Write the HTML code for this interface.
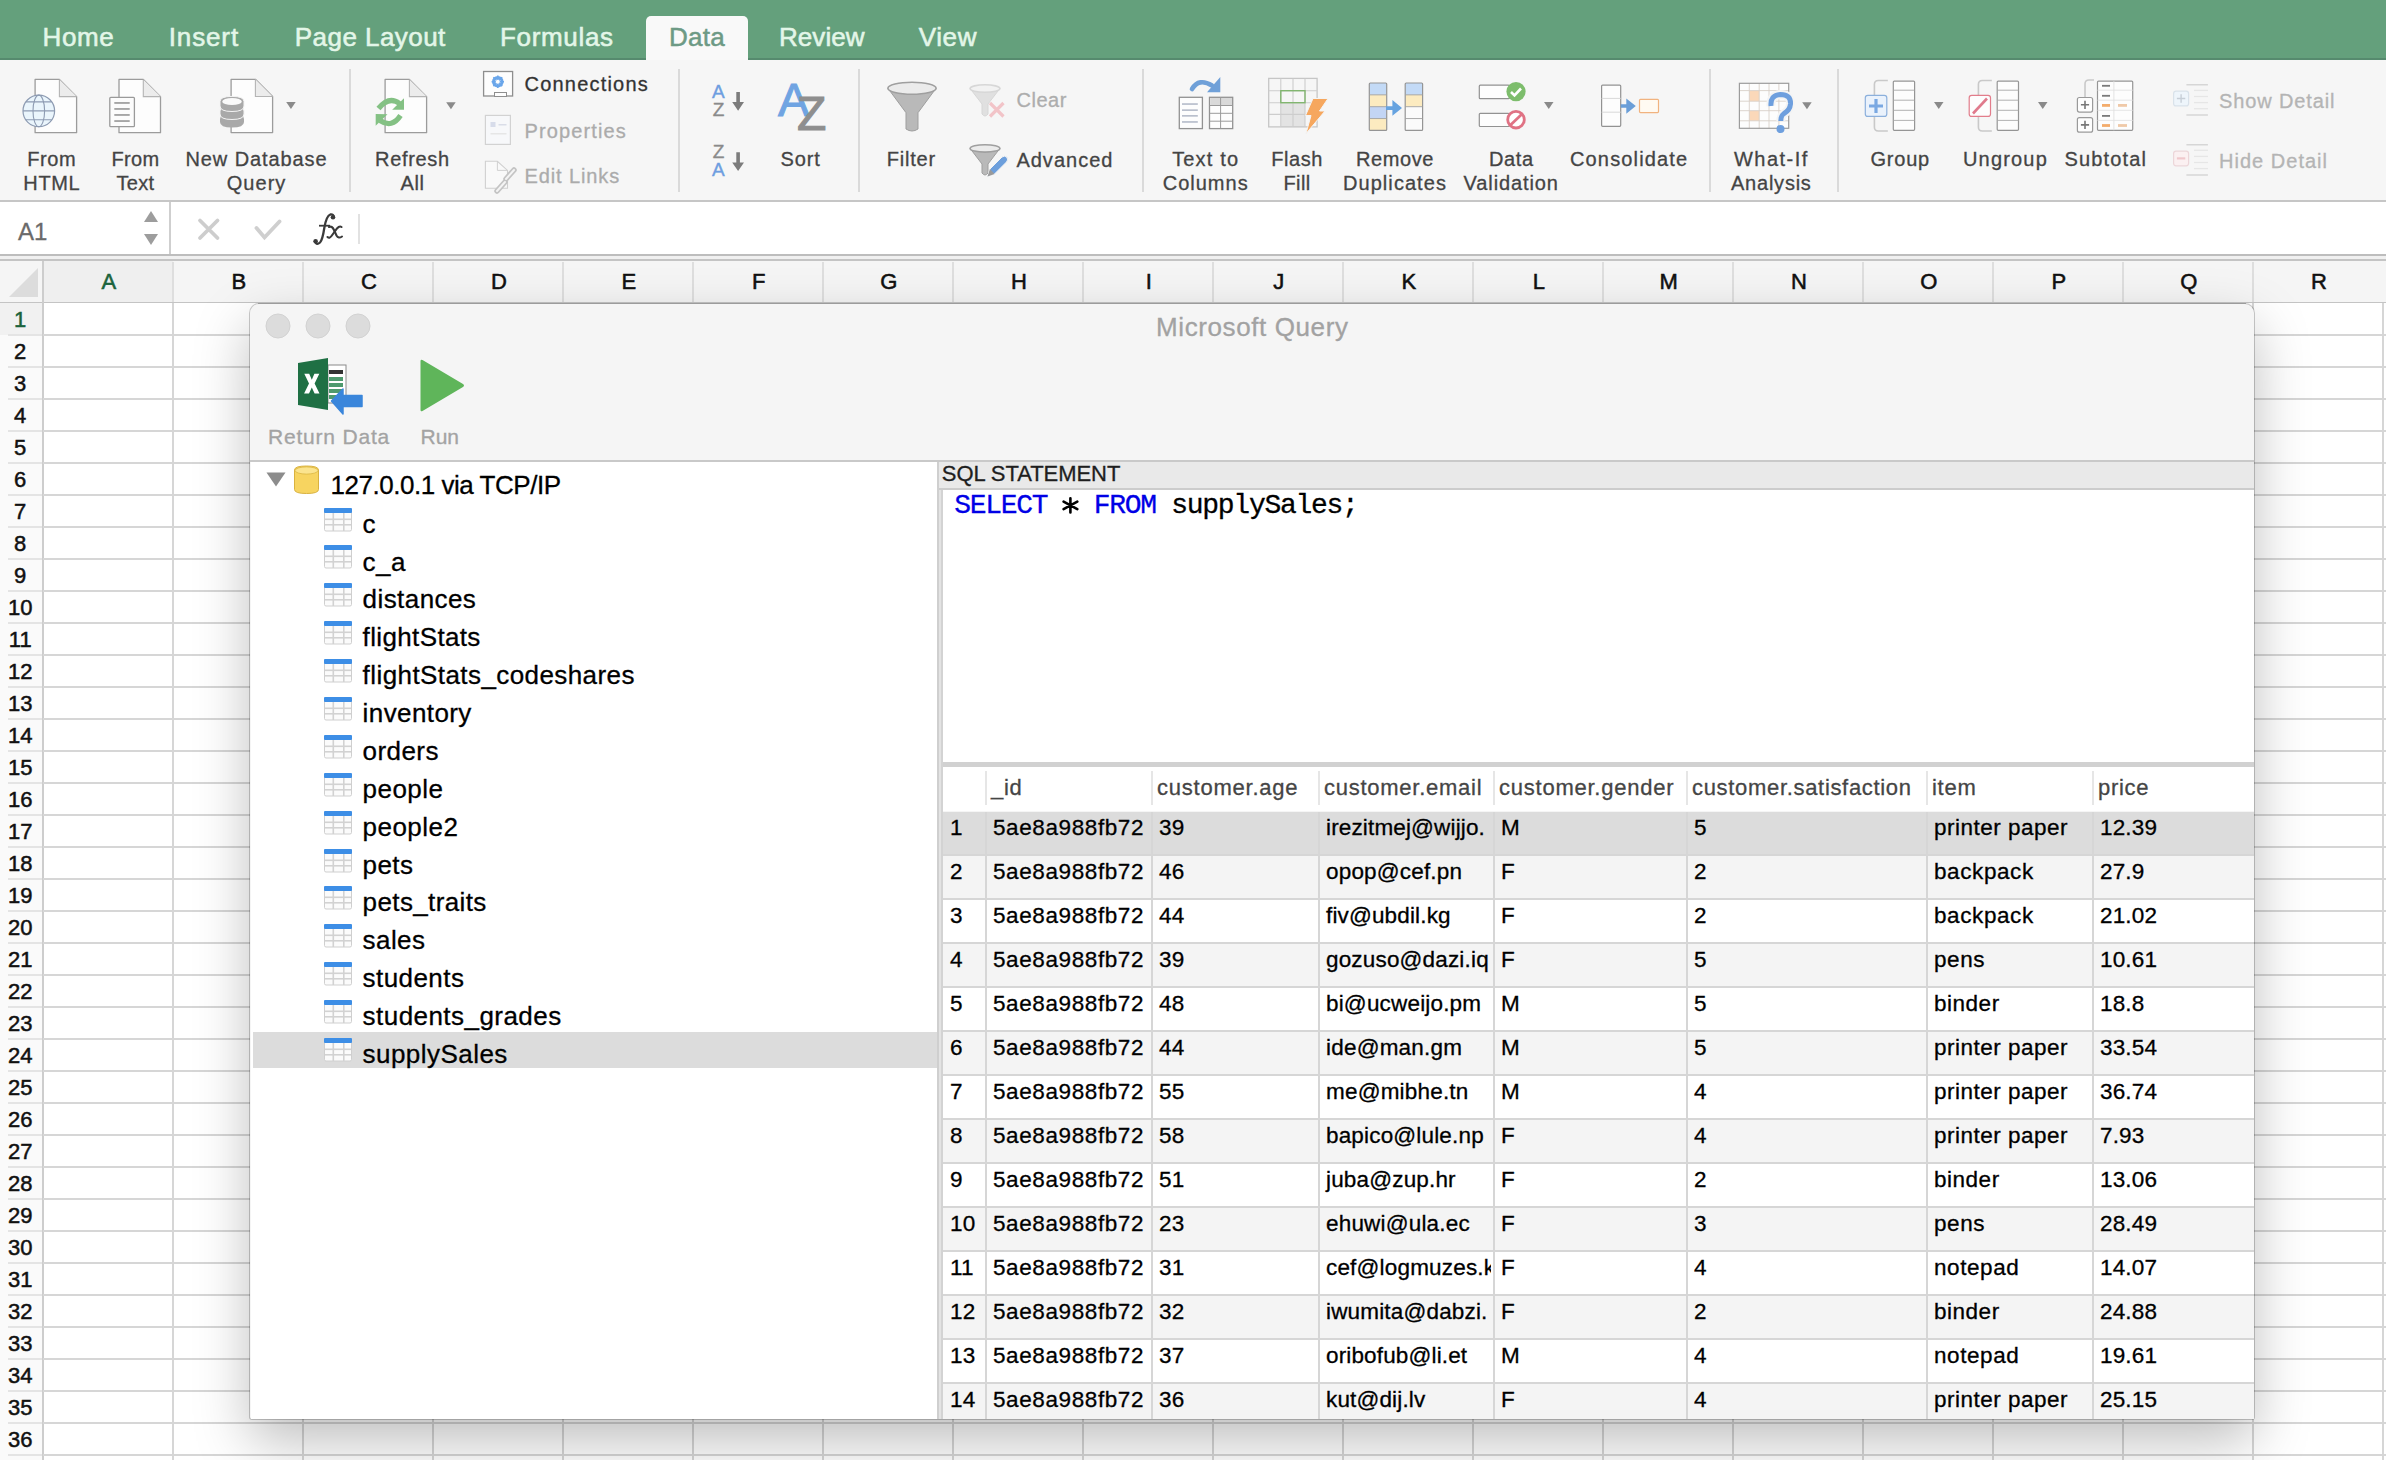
<!DOCTYPE html>
<html><head><meta charset="utf-8"><title>Excel Microsoft Query</title>
<style>
html,body{margin:0;padding:0;}
body{width:2386px;height:1460px;overflow:hidden;position:relative;background:#fff;font-family:"Liberation Sans",sans-serif;}
.t{position:absolute;white-space:pre;-webkit-text-stroke:0.3px currentColor;}
.r{position:absolute;}
.s{position:absolute;overflow:visible;}
</style></head><body>
<div class="r" style="left:0px;top:0px;width:2386px;height:60px;background:#64a07c;"></div>
<div class="r" style="left:0px;top:58px;width:2386px;height:2px;background:#568a6e;"></div>
<div class="r" style="left:646px;top:15.5px;width:102px;height:45.5px;background:#f9f9f9;border-radius:5px 5px 0 0;"></div>
<div class="t" style="left:42.5px;top:24.0px;font-size:26px;line-height:26px;color:#e3f6e8;letter-spacing:0.66px;-webkit-text-stroke:0.55px currentColor;">Home</div>
<div class="t" style="left:168.7px;top:24.0px;font-size:26px;line-height:26px;color:#e3f6e8;letter-spacing:0.88px;-webkit-text-stroke:0.55px currentColor;">Insert</div>
<div class="t" style="left:294.8px;top:24.0px;font-size:26px;line-height:26px;color:#e3f6e8;letter-spacing:0.45px;-webkit-text-stroke:0.55px currentColor;">Page Layout</div>
<div class="t" style="left:500.0px;top:24.0px;font-size:26px;line-height:26px;color:#e3f6e8;letter-spacing:0.67px;-webkit-text-stroke:0.55px currentColor;">Formulas</div>
<div class="t" style="left:778.9px;top:24.0px;font-size:26px;line-height:26px;color:#e3f6e8;letter-spacing:0.09px;-webkit-text-stroke:0.55px currentColor;">Review</div>
<div class="t" style="left:918.8px;top:24.0px;font-size:26px;line-height:26px;color:#e3f6e8;letter-spacing:0.58px;-webkit-text-stroke:0.55px currentColor;">View</div>
<div class="t" style="left:668.9px;top:24.0px;font-size:26px;line-height:26px;color:#6d9a85;letter-spacing:0.27px;-webkit-text-stroke:0.5px currentColor;">Data</div>
<div class="r" style="left:0px;top:60px;width:2386px;height:140px;background:#f6f6f6;"></div>
<div class="r" style="left:0px;top:200px;width:2386px;height:1.5px;background:#c6c6c6;"></div>
<div class="r" style="left:349px;top:69px;width:1.5px;height:123px;background:#dadada;"></div>
<div class="r" style="left:678px;top:69px;width:1.5px;height:123px;background:#dadada;"></div>
<div class="r" style="left:858px;top:69px;width:1.5px;height:123px;background:#dadada;"></div>
<div class="r" style="left:1142px;top:69px;width:1.5px;height:123px;background:#dadada;"></div>
<div class="r" style="left:1709px;top:69px;width:1.5px;height:123px;background:#dadada;"></div>
<div class="r" style="left:1837px;top:69px;width:1.5px;height:123px;background:#dadada;"></div>
<div class="t" style="left:27.3px;top:148.6px;font-size:20px;line-height:20px;color:#444444;letter-spacing:0.58px;">From</div>
<div class="t" style="left:23.3px;top:172.8px;font-size:20px;line-height:20px;color:#444444;letter-spacing:0.64px;">HTML</div>
<div class="t" style="left:111.5px;top:148.6px;font-size:20px;line-height:20px;color:#444444;letter-spacing:0.33px;">From</div>
<div class="t" style="left:116.5px;top:172.8px;font-size:20px;line-height:20px;color:#444444;letter-spacing:0.33px;">Text</div>
<div class="t" style="left:185.5px;top:148.6px;font-size:20px;line-height:20px;color:#444444;letter-spacing:0.90px;">New Database</div>
<div class="t" style="left:226.8px;top:172.8px;font-size:20px;line-height:20px;color:#444444;letter-spacing:1.01px;">Query</div>
<div class="t" style="left:375.1px;top:148.6px;font-size:20px;line-height:20px;color:#444444;letter-spacing:0.67px;">Refresh</div>
<div class="t" style="left:400.5px;top:172.8px;font-size:20px;line-height:20px;color:#444444;letter-spacing:0.59px;">All</div>
<div class="t" style="left:780.5px;top:148.6px;font-size:20px;line-height:20px;color:#444444;letter-spacing:0.90px;">Sort</div>
<div class="t" style="left:886.8px;top:148.6px;font-size:20px;line-height:20px;color:#444444;letter-spacing:0.79px;">Filter</div>
<div class="t" style="left:1172.2px;top:148.6px;font-size:20px;line-height:20px;color:#444444;letter-spacing:1.15px;">Text to</div>
<div class="t" style="left:1162.7px;top:172.8px;font-size:20px;line-height:20px;color:#444444;letter-spacing:1.01px;">Columns</div>
<div class="t" style="left:1271.2px;top:148.6px;font-size:20px;line-height:20px;color:#444444;letter-spacing:0.56px;">Flash</div>
<div class="t" style="left:1283.5px;top:172.8px;font-size:20px;line-height:20px;color:#444444;letter-spacing:0.36px;">Fill</div>
<div class="t" style="left:1356.0px;top:148.6px;font-size:20px;line-height:20px;color:#444444;letter-spacing:0.59px;">Remove</div>
<div class="t" style="left:1343.0px;top:172.8px;font-size:20px;line-height:20px;color:#444444;letter-spacing:1.06px;">Duplicates</div>
<div class="t" style="left:1489.0px;top:148.6px;font-size:20px;line-height:20px;color:#444444;letter-spacing:0.61px;">Data</div>
<div class="t" style="left:1463.6px;top:172.8px;font-size:20px;line-height:20px;color:#444444;letter-spacing:0.89px;">Validation</div>
<div class="t" style="left:1570.0px;top:148.6px;font-size:20px;line-height:20px;color:#444444;letter-spacing:1.15px;">Consolidate</div>
<div class="t" style="left:1734.0px;top:148.6px;font-size:20px;line-height:20px;color:#444444;letter-spacing:1.46px;">What-If</div>
<div class="t" style="left:1731.0px;top:172.8px;font-size:20px;line-height:20px;color:#444444;letter-spacing:0.77px;">Analysis</div>
<div class="t" style="left:1870.5px;top:148.6px;font-size:20px;line-height:20px;color:#444444;letter-spacing:0.78px;">Group</div>
<div class="t" style="left:1963.0px;top:148.6px;font-size:20px;line-height:20px;color:#444444;letter-spacing:1.18px;">Ungroup</div>
<div class="t" style="left:2064.6px;top:148.6px;font-size:20px;line-height:20px;color:#444444;letter-spacing:1.13px;">Subtotal</div>
<div class="t" style="left:524.5px;top:74.4px;font-size:20px;line-height:20px;color:#333;letter-spacing:1.21px;">Connections</div>
<div class="t" style="left:524.5px;top:120.8px;font-size:20px;line-height:20px;color:#ababab;letter-spacing:1.13px;">Properties</div>
<div class="t" style="left:524.5px;top:166.1px;font-size:20px;line-height:20px;color:#ababab;letter-spacing:0.88px;">Edit Links</div>
<div class="t" style="left:1016.4px;top:90.4px;font-size:20px;line-height:20px;color:#adadad;letter-spacing:0.56px;">Clear</div>
<div class="t" style="left:1016.4px;top:150.4px;font-size:20px;line-height:20px;color:#444444;letter-spacing:1.01px;">Advanced</div>
<div class="t" style="left:2219.0px;top:90.5px;font-size:20px;line-height:20px;color:#b4b4b4;letter-spacing:0.88px;">Show Detail</div>
<div class="t" style="left:2219.0px;top:150.9px;font-size:20px;line-height:20px;color:#b4b4b4;letter-spacing:1.02px;">Hide Detail</div>
<div class="r" style="left:0px;top:201.5px;width:2386px;height:52.5px;background:#ffffff;"></div>
<div class="r" style="left:169px;top:201.5px;width:1.5px;height:52.5px;background:#cfcfcf;"></div>
<div class="r" style="left:0px;top:254px;width:2386px;height:1.5px;background:#bdbdbd;"></div>
<div class="r" style="left:0px;top:255.5px;width:2386px;height:3.5px;background:#f0f0f0;"></div>
<div class="r" style="left:0px;top:259px;width:2386px;height:1.5px;background:#c4c4c4;"></div>
<div class="t" style="left:18.0px;top:219.7px;font-size:24px;line-height:24px;color:#6a6a6a;letter-spacing:0.07px;">A1</div>
<svg class="s" style="left:144px;top:211px;" width="14" height="11" viewBox="0 0 14 11"><path d="M7 0 L14 11 L0 11 Z" fill="#9d9d9d"/></svg>
<svg class="s" style="left:144px;top:234px;" width="14" height="11" viewBox="0 0 14 11"><path d="M0 0 L14 0 L7 11 Z" fill="#9d9d9d"/></svg>
<svg class="s" style="left:190px;top:205px;" width="170" height="45" viewBox="0 0 170 45"><path d="M10 15.5 L27.5 33 M27.5 15.5 L10 33" stroke="#cdcdcd" stroke-width="3.8" stroke-linecap="round"/><path d="M66.5 23 L74.5 32.5 L89.5 16.5" stroke="#cfcfcf" stroke-width="3.8" fill="none" stroke-linecap="round"/><path d="M125 36.5 Q126.5 40.5 130 37.5 Q132.5 35 134.3 23 Q136.3 11 140.3 9.5 Q143.8 9 143.6 12" stroke="#3a3a3a" stroke-width="2.3" fill="none" stroke-linecap="round"/><circle cx="125.6" cy="36.2" r="2.3" fill="#3a3a3a"/><circle cx="143" cy="12.2" r="2.3" fill="#3a3a3a"/><path d="M129 20.7 L140 20.7" stroke="#3a3a3a" stroke-width="1.8"/><path d="M139 22 Q142 20.5 144 25 L146.5 30.5 Q148.5 34 152 31.5" stroke="#3a3a3a" stroke-width="2.1" fill="none" stroke-linecap="round"/><path d="M151.5 22 Q149.5 20.5 147 23.5 L141.5 31 Q139.5 33.8 137.5 32" stroke="#3a3a3a" stroke-width="2.1" fill="none" stroke-linecap="round"/></svg>
<div class="r" style="left:358px;top:214px;width:1.5px;height:30px;background:#e2e2e2;"></div>
<div class="r" style="left:0px;top:260.5px;width:2386px;height:41px;background:#f5f5f5;"></div>
<div class="r" style="left:43px;top:260.5px;width:130px;height:41px;background:#efefef;"></div>
<div class="r" style="left:0px;top:301.5px;width:2386px;height:1.5px;background:#c4c4c4;"></div>
<svg class="s" style="left:9px;top:268px;" width="29" height="29" viewBox="0 0 29 29"><path d="M29 0 L29 29 L0 29 Z" fill="#dcdcdc"/></svg>
<div class="r" style="left:42.2px;top:260.5px;width:1.5px;height:1200px;background:#cdcdcd;"></div>
<div class="t" style="left:101.5px;top:271.1px;font-size:22px;line-height:22px;color:#1b633c;-webkit-text-stroke:0.55px currentColor;">A</div>
<div class="r" style="left:172.3px;top:262px;width:1.5px;height:40px;background:#dedede;"></div>
<div class="t" style="left:231.5px;top:271.1px;font-size:22px;line-height:22px;color:#111;-webkit-text-stroke:0.55px currentColor;">B</div>
<div class="r" style="left:302.3px;top:262px;width:1.5px;height:40px;background:#dedede;"></div>
<div class="t" style="left:360.9px;top:271.1px;font-size:22px;line-height:22px;color:#111;-webkit-text-stroke:0.55px currentColor;">C</div>
<div class="r" style="left:432.3px;top:262px;width:1.5px;height:40px;background:#dedede;"></div>
<div class="t" style="left:490.9px;top:271.1px;font-size:22px;line-height:22px;color:#111;-webkit-text-stroke:0.55px currentColor;">D</div>
<div class="r" style="left:562.3px;top:262px;width:1.5px;height:40px;background:#dedede;"></div>
<div class="t" style="left:621.5px;top:271.1px;font-size:22px;line-height:22px;color:#111;-webkit-text-stroke:0.55px currentColor;">E</div>
<div class="r" style="left:692.3px;top:262px;width:1.5px;height:40px;background:#dedede;"></div>
<div class="t" style="left:752.1px;top:271.1px;font-size:22px;line-height:22px;color:#111;-webkit-text-stroke:0.55px currentColor;">F</div>
<div class="r" style="left:822.3px;top:262px;width:1.5px;height:40px;background:#dedede;"></div>
<div class="t" style="left:880.2px;top:271.1px;font-size:22px;line-height:22px;color:#111;-webkit-text-stroke:0.55px currentColor;">G</div>
<div class="r" style="left:952.3px;top:262px;width:1.5px;height:40px;background:#dedede;"></div>
<div class="t" style="left:1010.9px;top:271.1px;font-size:22px;line-height:22px;color:#111;-webkit-text-stroke:0.55px currentColor;">H</div>
<div class="r" style="left:1082.3px;top:262px;width:1.5px;height:40px;background:#dedede;"></div>
<div class="t" style="left:1145.7px;top:271.1px;font-size:22px;line-height:22px;color:#111;-webkit-text-stroke:0.55px currentColor;">I</div>
<div class="r" style="left:1212.3px;top:262px;width:1.5px;height:40px;background:#dedede;"></div>
<div class="t" style="left:1273.3px;top:271.1px;font-size:22px;line-height:22px;color:#111;-webkit-text-stroke:0.55px currentColor;">J</div>
<div class="r" style="left:1342.3px;top:262px;width:1.5px;height:40px;background:#dedede;"></div>
<div class="t" style="left:1401.5px;top:271.1px;font-size:22px;line-height:22px;color:#111;-webkit-text-stroke:0.55px currentColor;">K</div>
<div class="r" style="left:1472.3px;top:262px;width:1.5px;height:40px;background:#dedede;"></div>
<div class="t" style="left:1532.7px;top:271.1px;font-size:22px;line-height:22px;color:#111;-webkit-text-stroke:0.55px currentColor;">L</div>
<div class="r" style="left:1602.3px;top:262px;width:1.5px;height:40px;background:#dedede;"></div>
<div class="t" style="left:1659.6px;top:271.1px;font-size:22px;line-height:22px;color:#111;-webkit-text-stroke:0.55px currentColor;">M</div>
<div class="r" style="left:1732.3px;top:262px;width:1.5px;height:40px;background:#dedede;"></div>
<div class="t" style="left:1790.9px;top:271.1px;font-size:22px;line-height:22px;color:#111;-webkit-text-stroke:0.55px currentColor;">N</div>
<div class="r" style="left:1862.3px;top:262px;width:1.5px;height:40px;background:#dedede;"></div>
<div class="t" style="left:1920.2px;top:271.1px;font-size:22px;line-height:22px;color:#111;-webkit-text-stroke:0.55px currentColor;">O</div>
<div class="r" style="left:1992.3px;top:262px;width:1.5px;height:40px;background:#dedede;"></div>
<div class="t" style="left:2051.5px;top:271.1px;font-size:22px;line-height:22px;color:#111;-webkit-text-stroke:0.55px currentColor;">P</div>
<div class="r" style="left:2122.3px;top:262px;width:1.5px;height:40px;background:#dedede;"></div>
<div class="t" style="left:2180.2px;top:271.1px;font-size:22px;line-height:22px;color:#111;-webkit-text-stroke:0.55px currentColor;">Q</div>
<div class="r" style="left:2252.3px;top:262px;width:1.5px;height:40px;background:#dedede;"></div>
<div class="t" style="left:2310.9px;top:271.1px;font-size:22px;line-height:22px;color:#111;-webkit-text-stroke:0.55px currentColor;">R</div>
<div class="r" style="left:43.7px;top:303px;width:2343px;height:1160px;background:#ffffff;"></div>
<div class="r" style="left:0px;top:303px;width:42.2px;height:1160px;background:#fafafa;"></div>
<div class="r" style="left:0px;top:303px;width:42.2px;height:32px;background:#f1f1f1;"></div>
<div class="r" style="left:43px;top:334px;width:2343px;height:1.5px;background:#d6d6d6;"></div>
<div class="r" style="left:8px;top:334px;width:34px;height:1.5px;background:#e4e4e4;"></div>
<div class="r" style="left:43px;top:366px;width:2343px;height:1.5px;background:#d6d6d6;"></div>
<div class="r" style="left:8px;top:366px;width:34px;height:1.5px;background:#e4e4e4;"></div>
<div class="r" style="left:43px;top:398px;width:2343px;height:1.5px;background:#d6d6d6;"></div>
<div class="r" style="left:8px;top:398px;width:34px;height:1.5px;background:#e4e4e4;"></div>
<div class="r" style="left:43px;top:430px;width:2343px;height:1.5px;background:#d6d6d6;"></div>
<div class="r" style="left:8px;top:430px;width:34px;height:1.5px;background:#e4e4e4;"></div>
<div class="r" style="left:43px;top:462px;width:2343px;height:1.5px;background:#d6d6d6;"></div>
<div class="r" style="left:8px;top:462px;width:34px;height:1.5px;background:#e4e4e4;"></div>
<div class="r" style="left:43px;top:494px;width:2343px;height:1.5px;background:#d6d6d6;"></div>
<div class="r" style="left:8px;top:494px;width:34px;height:1.5px;background:#e4e4e4;"></div>
<div class="r" style="left:43px;top:526px;width:2343px;height:1.5px;background:#d6d6d6;"></div>
<div class="r" style="left:8px;top:526px;width:34px;height:1.5px;background:#e4e4e4;"></div>
<div class="r" style="left:43px;top:558px;width:2343px;height:1.5px;background:#d6d6d6;"></div>
<div class="r" style="left:8px;top:558px;width:34px;height:1.5px;background:#e4e4e4;"></div>
<div class="r" style="left:43px;top:590px;width:2343px;height:1.5px;background:#d6d6d6;"></div>
<div class="r" style="left:8px;top:590px;width:34px;height:1.5px;background:#e4e4e4;"></div>
<div class="r" style="left:43px;top:622px;width:2343px;height:1.5px;background:#d6d6d6;"></div>
<div class="r" style="left:8px;top:622px;width:34px;height:1.5px;background:#e4e4e4;"></div>
<div class="r" style="left:43px;top:654px;width:2343px;height:1.5px;background:#d6d6d6;"></div>
<div class="r" style="left:8px;top:654px;width:34px;height:1.5px;background:#e4e4e4;"></div>
<div class="r" style="left:43px;top:686px;width:2343px;height:1.5px;background:#d6d6d6;"></div>
<div class="r" style="left:8px;top:686px;width:34px;height:1.5px;background:#e4e4e4;"></div>
<div class="r" style="left:43px;top:718px;width:2343px;height:1.5px;background:#d6d6d6;"></div>
<div class="r" style="left:8px;top:718px;width:34px;height:1.5px;background:#e4e4e4;"></div>
<div class="r" style="left:43px;top:750px;width:2343px;height:1.5px;background:#d6d6d6;"></div>
<div class="r" style="left:8px;top:750px;width:34px;height:1.5px;background:#e4e4e4;"></div>
<div class="r" style="left:43px;top:782px;width:2343px;height:1.5px;background:#d6d6d6;"></div>
<div class="r" style="left:8px;top:782px;width:34px;height:1.5px;background:#e4e4e4;"></div>
<div class="r" style="left:43px;top:814px;width:2343px;height:1.5px;background:#d6d6d6;"></div>
<div class="r" style="left:8px;top:814px;width:34px;height:1.5px;background:#e4e4e4;"></div>
<div class="r" style="left:43px;top:846px;width:2343px;height:1.5px;background:#d6d6d6;"></div>
<div class="r" style="left:8px;top:846px;width:34px;height:1.5px;background:#e4e4e4;"></div>
<div class="r" style="left:43px;top:878px;width:2343px;height:1.5px;background:#d6d6d6;"></div>
<div class="r" style="left:8px;top:878px;width:34px;height:1.5px;background:#e4e4e4;"></div>
<div class="r" style="left:43px;top:910px;width:2343px;height:1.5px;background:#d6d6d6;"></div>
<div class="r" style="left:8px;top:910px;width:34px;height:1.5px;background:#e4e4e4;"></div>
<div class="r" style="left:43px;top:942px;width:2343px;height:1.5px;background:#d6d6d6;"></div>
<div class="r" style="left:8px;top:942px;width:34px;height:1.5px;background:#e4e4e4;"></div>
<div class="r" style="left:43px;top:974px;width:2343px;height:1.5px;background:#d6d6d6;"></div>
<div class="r" style="left:8px;top:974px;width:34px;height:1.5px;background:#e4e4e4;"></div>
<div class="r" style="left:43px;top:1006px;width:2343px;height:1.5px;background:#d6d6d6;"></div>
<div class="r" style="left:8px;top:1006px;width:34px;height:1.5px;background:#e4e4e4;"></div>
<div class="r" style="left:43px;top:1038px;width:2343px;height:1.5px;background:#d6d6d6;"></div>
<div class="r" style="left:8px;top:1038px;width:34px;height:1.5px;background:#e4e4e4;"></div>
<div class="r" style="left:43px;top:1070px;width:2343px;height:1.5px;background:#d6d6d6;"></div>
<div class="r" style="left:8px;top:1070px;width:34px;height:1.5px;background:#e4e4e4;"></div>
<div class="r" style="left:43px;top:1102px;width:2343px;height:1.5px;background:#d6d6d6;"></div>
<div class="r" style="left:8px;top:1102px;width:34px;height:1.5px;background:#e4e4e4;"></div>
<div class="r" style="left:43px;top:1134px;width:2343px;height:1.5px;background:#d6d6d6;"></div>
<div class="r" style="left:8px;top:1134px;width:34px;height:1.5px;background:#e4e4e4;"></div>
<div class="r" style="left:43px;top:1166px;width:2343px;height:1.5px;background:#d6d6d6;"></div>
<div class="r" style="left:8px;top:1166px;width:34px;height:1.5px;background:#e4e4e4;"></div>
<div class="r" style="left:43px;top:1198px;width:2343px;height:1.5px;background:#d6d6d6;"></div>
<div class="r" style="left:8px;top:1198px;width:34px;height:1.5px;background:#e4e4e4;"></div>
<div class="r" style="left:43px;top:1230px;width:2343px;height:1.5px;background:#d6d6d6;"></div>
<div class="r" style="left:8px;top:1230px;width:34px;height:1.5px;background:#e4e4e4;"></div>
<div class="r" style="left:43px;top:1262px;width:2343px;height:1.5px;background:#d6d6d6;"></div>
<div class="r" style="left:8px;top:1262px;width:34px;height:1.5px;background:#e4e4e4;"></div>
<div class="r" style="left:43px;top:1294px;width:2343px;height:1.5px;background:#d6d6d6;"></div>
<div class="r" style="left:8px;top:1294px;width:34px;height:1.5px;background:#e4e4e4;"></div>
<div class="r" style="left:43px;top:1326px;width:2343px;height:1.5px;background:#d6d6d6;"></div>
<div class="r" style="left:8px;top:1326px;width:34px;height:1.5px;background:#e4e4e4;"></div>
<div class="r" style="left:43px;top:1358px;width:2343px;height:1.5px;background:#d6d6d6;"></div>
<div class="r" style="left:8px;top:1358px;width:34px;height:1.5px;background:#e4e4e4;"></div>
<div class="r" style="left:43px;top:1390px;width:2343px;height:1.5px;background:#d6d6d6;"></div>
<div class="r" style="left:8px;top:1390px;width:34px;height:1.5px;background:#e4e4e4;"></div>
<div class="r" style="left:43px;top:1422px;width:2343px;height:1.5px;background:#d6d6d6;"></div>
<div class="r" style="left:8px;top:1422px;width:34px;height:1.5px;background:#e4e4e4;"></div>
<div class="r" style="left:43px;top:1454px;width:2343px;height:1.5px;background:#d6d6d6;"></div>
<div class="r" style="left:8px;top:1454px;width:34px;height:1.5px;background:#e4e4e4;"></div>
<div class="r" style="left:43px;top:1486px;width:2343px;height:1.5px;background:#d6d6d6;"></div>
<div class="r" style="left:8px;top:1486px;width:34px;height:1.5px;background:#e4e4e4;"></div>
<div class="r" style="left:172.3px;top:303px;width:1.5px;height:1160px;background:#d6d6d6;"></div>
<div class="r" style="left:302.3px;top:303px;width:1.5px;height:1160px;background:#d6d6d6;"></div>
<div class="r" style="left:432.3px;top:303px;width:1.5px;height:1160px;background:#d6d6d6;"></div>
<div class="r" style="left:562.3px;top:303px;width:1.5px;height:1160px;background:#d6d6d6;"></div>
<div class="r" style="left:692.3px;top:303px;width:1.5px;height:1160px;background:#d6d6d6;"></div>
<div class="r" style="left:822.3px;top:303px;width:1.5px;height:1160px;background:#d6d6d6;"></div>
<div class="r" style="left:952.3px;top:303px;width:1.5px;height:1160px;background:#d6d6d6;"></div>
<div class="r" style="left:1082.3px;top:303px;width:1.5px;height:1160px;background:#d6d6d6;"></div>
<div class="r" style="left:1212.3px;top:303px;width:1.5px;height:1160px;background:#d6d6d6;"></div>
<div class="r" style="left:1342.3px;top:303px;width:1.5px;height:1160px;background:#d6d6d6;"></div>
<div class="r" style="left:1472.3px;top:303px;width:1.5px;height:1160px;background:#d6d6d6;"></div>
<div class="r" style="left:1602.3px;top:303px;width:1.5px;height:1160px;background:#d6d6d6;"></div>
<div class="r" style="left:1732.3px;top:303px;width:1.5px;height:1160px;background:#d6d6d6;"></div>
<div class="r" style="left:1862.3px;top:303px;width:1.5px;height:1160px;background:#d6d6d6;"></div>
<div class="r" style="left:1992.3px;top:303px;width:1.5px;height:1160px;background:#d6d6d6;"></div>
<div class="r" style="left:2122.3px;top:303px;width:1.5px;height:1160px;background:#d6d6d6;"></div>
<div class="r" style="left:2252.3px;top:303px;width:1.5px;height:1160px;background:#d6d6d6;"></div>
<div class="r" style="left:2382.3px;top:303px;width:1.5px;height:1160px;background:#d6d6d6;"></div>
<div class="t" style="left:14.1px;top:309.4px;font-size:22px;line-height:22px;color:#1b633c;-webkit-text-stroke:0.5px currentColor;">1</div>
<div class="t" style="left:14.1px;top:341.4px;font-size:22px;line-height:22px;color:#111;-webkit-text-stroke:0.5px currentColor;">2</div>
<div class="t" style="left:14.1px;top:373.4px;font-size:22px;line-height:22px;color:#111;-webkit-text-stroke:0.5px currentColor;">3</div>
<div class="t" style="left:14.1px;top:405.4px;font-size:22px;line-height:22px;color:#111;-webkit-text-stroke:0.5px currentColor;">4</div>
<div class="t" style="left:14.1px;top:437.4px;font-size:22px;line-height:22px;color:#111;-webkit-text-stroke:0.5px currentColor;">5</div>
<div class="t" style="left:14.1px;top:469.4px;font-size:22px;line-height:22px;color:#111;-webkit-text-stroke:0.5px currentColor;">6</div>
<div class="t" style="left:14.1px;top:501.4px;font-size:22px;line-height:22px;color:#111;-webkit-text-stroke:0.5px currentColor;">7</div>
<div class="t" style="left:14.1px;top:533.4px;font-size:22px;line-height:22px;color:#111;-webkit-text-stroke:0.5px currentColor;">8</div>
<div class="t" style="left:14.1px;top:565.4px;font-size:22px;line-height:22px;color:#111;-webkit-text-stroke:0.5px currentColor;">9</div>
<div class="t" style="left:8.0px;top:597.4px;font-size:22px;line-height:22px;color:#111;-webkit-text-stroke:0.5px currentColor;">10</div>
<div class="t" style="left:8.8px;top:629.4px;font-size:22px;line-height:22px;color:#111;-webkit-text-stroke:0.5px currentColor;">11</div>
<div class="t" style="left:8.0px;top:661.4px;font-size:22px;line-height:22px;color:#111;-webkit-text-stroke:0.5px currentColor;">12</div>
<div class="t" style="left:8.0px;top:693.4px;font-size:22px;line-height:22px;color:#111;-webkit-text-stroke:0.5px currentColor;">13</div>
<div class="t" style="left:8.0px;top:725.4px;font-size:22px;line-height:22px;color:#111;-webkit-text-stroke:0.5px currentColor;">14</div>
<div class="t" style="left:8.0px;top:757.4px;font-size:22px;line-height:22px;color:#111;-webkit-text-stroke:0.5px currentColor;">15</div>
<div class="t" style="left:8.0px;top:789.4px;font-size:22px;line-height:22px;color:#111;-webkit-text-stroke:0.5px currentColor;">16</div>
<div class="t" style="left:8.0px;top:821.4px;font-size:22px;line-height:22px;color:#111;-webkit-text-stroke:0.5px currentColor;">17</div>
<div class="t" style="left:8.0px;top:853.4px;font-size:22px;line-height:22px;color:#111;-webkit-text-stroke:0.5px currentColor;">18</div>
<div class="t" style="left:8.0px;top:885.4px;font-size:22px;line-height:22px;color:#111;-webkit-text-stroke:0.5px currentColor;">19</div>
<div class="t" style="left:8.0px;top:917.4px;font-size:22px;line-height:22px;color:#111;-webkit-text-stroke:0.5px currentColor;">20</div>
<div class="t" style="left:8.0px;top:949.4px;font-size:22px;line-height:22px;color:#111;-webkit-text-stroke:0.5px currentColor;">21</div>
<div class="t" style="left:8.0px;top:981.4px;font-size:22px;line-height:22px;color:#111;-webkit-text-stroke:0.5px currentColor;">22</div>
<div class="t" style="left:8.0px;top:1013.4px;font-size:22px;line-height:22px;color:#111;-webkit-text-stroke:0.5px currentColor;">23</div>
<div class="t" style="left:8.0px;top:1045.4px;font-size:22px;line-height:22px;color:#111;-webkit-text-stroke:0.5px currentColor;">24</div>
<div class="t" style="left:8.0px;top:1077.4px;font-size:22px;line-height:22px;color:#111;-webkit-text-stroke:0.5px currentColor;">25</div>
<div class="t" style="left:8.0px;top:1109.4px;font-size:22px;line-height:22px;color:#111;-webkit-text-stroke:0.5px currentColor;">26</div>
<div class="t" style="left:8.0px;top:1141.4px;font-size:22px;line-height:22px;color:#111;-webkit-text-stroke:0.5px currentColor;">27</div>
<div class="t" style="left:8.0px;top:1173.4px;font-size:22px;line-height:22px;color:#111;-webkit-text-stroke:0.5px currentColor;">28</div>
<div class="t" style="left:8.0px;top:1205.4px;font-size:22px;line-height:22px;color:#111;-webkit-text-stroke:0.5px currentColor;">29</div>
<div class="t" style="left:8.0px;top:1237.4px;font-size:22px;line-height:22px;color:#111;-webkit-text-stroke:0.5px currentColor;">30</div>
<div class="t" style="left:8.0px;top:1269.4px;font-size:22px;line-height:22px;color:#111;-webkit-text-stroke:0.5px currentColor;">31</div>
<div class="t" style="left:8.0px;top:1301.4px;font-size:22px;line-height:22px;color:#111;-webkit-text-stroke:0.5px currentColor;">32</div>
<div class="t" style="left:8.0px;top:1333.4px;font-size:22px;line-height:22px;color:#111;-webkit-text-stroke:0.5px currentColor;">33</div>
<div class="t" style="left:8.0px;top:1365.4px;font-size:22px;line-height:22px;color:#111;-webkit-text-stroke:0.5px currentColor;">34</div>
<div class="t" style="left:8.0px;top:1397.4px;font-size:22px;line-height:22px;color:#111;-webkit-text-stroke:0.5px currentColor;">35</div>
<div class="t" style="left:8.0px;top:1429.4px;font-size:22px;line-height:22px;color:#111;-webkit-text-stroke:0.5px currentColor;">36</div>
<div class="r" style="left:249.5px;top:304px;width:2004.0px;height:1114.5px;background:#f5f5f5;border-radius:9px 9px 2px 2px;box-shadow:0 22px 55px rgba(0,0,0,0.26),0 0 0 1px rgba(0,0,0,0.2);"></div>
<div class="r" style="left:258px;top:302.5px;width:1988px;height:1.5px;background:#9c9c9c;"></div>
<svg class="s" style="left:265px;top:313px;" width="26" height="26" viewBox="0 0 26 26"><circle cx="13" cy="13" r="12" fill="#dcdcdc" stroke="#d2d2d2" stroke-width="1"/></svg>
<svg class="s" style="left:305px;top:313px;" width="26" height="26" viewBox="0 0 26 26"><circle cx="13" cy="13" r="12" fill="#dcdcdc" stroke="#d2d2d2" stroke-width="1"/></svg>
<svg class="s" style="left:345px;top:313px;" width="26" height="26" viewBox="0 0 26 26"><circle cx="13" cy="13" r="12" fill="#dcdcdc" stroke="#d2d2d2" stroke-width="1"/></svg>
<div class="t" style="left:1156.0px;top:313.8px;font-size:26px;line-height:26px;color:#a2a2a2;letter-spacing:0.60px;">Microsoft Query</div>
<svg class="s" style="left:298px;top:358px;" width="66" height="58" viewBox="0 0 66 58"><rect x="30" y="7" width="18" height="38" fill="#fff" stroke="#8a8a8a" stroke-width="1"/><rect x="31" y="12" width="14" height="4" fill="#333"/><rect x="31" y="19" width="14" height="4" fill="#4e9a6e"/><rect x="31" y="25" width="14" height="4" fill="#4e9a6e"/><rect x="31" y="31" width="14" height="4" fill="#4e9a6e"/><rect x="31" y="37" width="14" height="4" fill="#4e9a6e"/><path d="M0 5 L30 0 L30 52 L0 47 Z" fill="#1f7044"/><path d="M6.3 15.8 L11.2 15.8 L13.8 21.8 L16.4 15.8 L21.3 15.8 L16.6 25.6 L21.5 35.6 L16.6 35.6 L13.8 29.5 L11 35.6 L6.1 35.6 L11 25.6 Z" fill="#fff"/><path d="M33.5 43 L45 31 L45 37.5 L64 37.5 L64 48.5 L45 48.5 L45 56 Z" fill="#3a86db" stroke="#3a86db" stroke-width="1.5" stroke-linejoin="round"/></svg>
<svg class="s" style="left:419px;top:359px;" width="46" height="54" viewBox="0 0 46 54"><path d="M1.5 2 Q1.5 0 3.5 1 L44 25 Q46 26.5 44 28 L3.5 52 Q1.5 53 1.5 51 Z" fill="#5fb55a"/></svg>
<div class="t" style="left:268.0px;top:425.7px;font-size:21px;line-height:21px;color:#a3a3a3;letter-spacing:0.80px;">Return Data</div>
<div class="t" style="left:420.5px;top:425.7px;font-size:21px;line-height:21px;color:#a3a3a3;">Run</div>
<div class="r" style="left:249.5px;top:459.5px;width:2004.0px;height:2px;background:#c9c9c9;"></div>
<div class="r" style="left:251px;top:461.5px;width:686px;height:957.0px;background:#ffffff;"></div>
<div class="r" style="left:252.5px;top:1032px;width:684.5px;height:35.5px;background:#dcdcdc;"></div>
<svg class="s" style="left:266px;top:472px;" width="20" height="15" viewBox="0 0 20 15"><path d="M0.5 0.5 L19.5 0.5 L10 14.5 Z" fill="#8c8c8c"/></svg>
<svg class="s" style="left:293px;top:465px;" width="27" height="30" viewBox="0 0 27 30"><path d="M1.5 5 Q1.5 1 13.5 1 Q25.5 1 25.5 5 L25.5 24.5 Q25.5 28.5 13.5 28.5 Q1.5 28.5 1.5 24.5 Z" fill="#f7d460" stroke="#d9b240" stroke-width="1"/><ellipse cx="13.5" cy="5.5" rx="11.5" ry="3.6" fill="#fbe48e" stroke="#dcb845" stroke-width="0.8"/></svg>
<div class="t" style="left:330.5px;top:472.4px;font-size:26px;line-height:26px;color:#000;letter-spacing:-0.47px;">127.0.0.1 via TCP/IP</div>
<svg class="s" style="left:324px;top:508px;" width="28" height="24" viewBox="0 0 28 24"><rect x="0.5" y="0.5" width="27" height="22.5" rx="1.5" fill="#fbfbfb" stroke="#cfcfcf" stroke-width="1"/><rect x="0" y="0" width="28" height="5" rx="1" fill="#3d8ee6"/><rect x="1" y="10.5" width="26" height="1.6" fill="#d2d2d2"/><rect x="1" y="16" width="26" height="1.6" fill="#d2d2d2"/><rect x="8.5" y="5" width="1.6" height="18" fill="#d2d2d2"/><rect x="19" y="5" width="1.6" height="18" fill="#d2d2d2"/></svg>
<div class="t" style="left:362.6px;top:510.6px;font-size:26px;line-height:26px;color:#000;letter-spacing:0.45px;">c</div>
<svg class="s" style="left:324px;top:545px;" width="28" height="24" viewBox="0 0 28 24"><rect x="0.5" y="0.5" width="27" height="22.5" rx="1.5" fill="#fbfbfb" stroke="#cfcfcf" stroke-width="1"/><rect x="0" y="0" width="28" height="5" rx="1" fill="#3d8ee6"/><rect x="1" y="10.5" width="26" height="1.6" fill="#d2d2d2"/><rect x="1" y="16" width="26" height="1.6" fill="#d2d2d2"/><rect x="8.5" y="5" width="1.6" height="18" fill="#d2d2d2"/><rect x="19" y="5" width="1.6" height="18" fill="#d2d2d2"/></svg>
<div class="t" style="left:362.6px;top:548.5px;font-size:26px;line-height:26px;color:#000;letter-spacing:0.49px;">c_a</div>
<svg class="s" style="left:324px;top:583px;" width="28" height="24" viewBox="0 0 28 24"><rect x="0.5" y="0.5" width="27" height="22.5" rx="1.5" fill="#fbfbfb" stroke="#cfcfcf" stroke-width="1"/><rect x="0" y="0" width="28" height="5" rx="1" fill="#3d8ee6"/><rect x="1" y="10.5" width="26" height="1.6" fill="#d2d2d2"/><rect x="1" y="16" width="26" height="1.6" fill="#d2d2d2"/><rect x="8.5" y="5" width="1.6" height="18" fill="#d2d2d2"/><rect x="19" y="5" width="1.6" height="18" fill="#d2d2d2"/></svg>
<div class="t" style="left:362.6px;top:586.4px;font-size:26px;line-height:26px;color:#000;letter-spacing:0.43px;">distances</div>
<svg class="s" style="left:324px;top:621px;" width="28" height="24" viewBox="0 0 28 24"><rect x="0.5" y="0.5" width="27" height="22.5" rx="1.5" fill="#fbfbfb" stroke="#cfcfcf" stroke-width="1"/><rect x="0" y="0" width="28" height="5" rx="1" fill="#3d8ee6"/><rect x="1" y="10.5" width="26" height="1.6" fill="#d2d2d2"/><rect x="1" y="16" width="26" height="1.6" fill="#d2d2d2"/><rect x="8.5" y="5" width="1.6" height="18" fill="#d2d2d2"/><rect x="19" y="5" width="1.6" height="18" fill="#d2d2d2"/></svg>
<div class="t" style="left:362.6px;top:624.2px;font-size:26px;line-height:26px;color:#000;letter-spacing:0.36px;">flightStats</div>
<svg class="s" style="left:324px;top:659px;" width="28" height="24" viewBox="0 0 28 24"><rect x="0.5" y="0.5" width="27" height="22.5" rx="1.5" fill="#fbfbfb" stroke="#cfcfcf" stroke-width="1"/><rect x="0" y="0" width="28" height="5" rx="1" fill="#3d8ee6"/><rect x="1" y="10.5" width="26" height="1.6" fill="#d2d2d2"/><rect x="1" y="16" width="26" height="1.6" fill="#d2d2d2"/><rect x="8.5" y="5" width="1.6" height="18" fill="#d2d2d2"/><rect x="19" y="5" width="1.6" height="18" fill="#d2d2d2"/></svg>
<div class="t" style="left:362.6px;top:662.1px;font-size:26px;line-height:26px;color:#000;letter-spacing:0.42px;">flightStats_codeshares</div>
<svg class="s" style="left:324px;top:697px;" width="28" height="24" viewBox="0 0 28 24"><rect x="0.5" y="0.5" width="27" height="22.5" rx="1.5" fill="#fbfbfb" stroke="#cfcfcf" stroke-width="1"/><rect x="0" y="0" width="28" height="5" rx="1" fill="#3d8ee6"/><rect x="1" y="10.5" width="26" height="1.6" fill="#d2d2d2"/><rect x="1" y="16" width="26" height="1.6" fill="#d2d2d2"/><rect x="8.5" y="5" width="1.6" height="18" fill="#d2d2d2"/><rect x="19" y="5" width="1.6" height="18" fill="#d2d2d2"/></svg>
<div class="t" style="left:362.6px;top:700.0px;font-size:26px;line-height:26px;color:#000;letter-spacing:0.41px;">inventory</div>
<svg class="s" style="left:324px;top:735px;" width="28" height="24" viewBox="0 0 28 24"><rect x="0.5" y="0.5" width="27" height="22.5" rx="1.5" fill="#fbfbfb" stroke="#cfcfcf" stroke-width="1"/><rect x="0" y="0" width="28" height="5" rx="1" fill="#3d8ee6"/><rect x="1" y="10.5" width="26" height="1.6" fill="#d2d2d2"/><rect x="1" y="16" width="26" height="1.6" fill="#d2d2d2"/><rect x="8.5" y="5" width="1.6" height="18" fill="#d2d2d2"/><rect x="19" y="5" width="1.6" height="18" fill="#d2d2d2"/></svg>
<div class="t" style="left:362.6px;top:737.9px;font-size:26px;line-height:26px;color:#000;letter-spacing:0.43px;">orders</div>
<svg class="s" style="left:324px;top:773px;" width="28" height="24" viewBox="0 0 28 24"><rect x="0.5" y="0.5" width="27" height="22.5" rx="1.5" fill="#fbfbfb" stroke="#cfcfcf" stroke-width="1"/><rect x="0" y="0" width="28" height="5" rx="1" fill="#3d8ee6"/><rect x="1" y="10.5" width="26" height="1.6" fill="#d2d2d2"/><rect x="1" y="16" width="26" height="1.6" fill="#d2d2d2"/><rect x="8.5" y="5" width="1.6" height="18" fill="#d2d2d2"/><rect x="19" y="5" width="1.6" height="18" fill="#d2d2d2"/></svg>
<div class="t" style="left:362.6px;top:775.8px;font-size:26px;line-height:26px;color:#000;letter-spacing:0.46px;">people</div>
<svg class="s" style="left:324px;top:811px;" width="28" height="24" viewBox="0 0 28 24"><rect x="0.5" y="0.5" width="27" height="22.5" rx="1.5" fill="#fbfbfb" stroke="#cfcfcf" stroke-width="1"/><rect x="0" y="0" width="28" height="5" rx="1" fill="#3d8ee6"/><rect x="1" y="10.5" width="26" height="1.6" fill="#d2d2d2"/><rect x="1" y="16" width="26" height="1.6" fill="#d2d2d2"/><rect x="8.5" y="5" width="1.6" height="18" fill="#d2d2d2"/><rect x="19" y="5" width="1.6" height="18" fill="#d2d2d2"/></svg>
<div class="t" style="left:362.6px;top:813.6px;font-size:26px;line-height:26px;color:#000;letter-spacing:0.46px;">people2</div>
<svg class="s" style="left:324px;top:849px;" width="28" height="24" viewBox="0 0 28 24"><rect x="0.5" y="0.5" width="27" height="22.5" rx="1.5" fill="#fbfbfb" stroke="#cfcfcf" stroke-width="1"/><rect x="0" y="0" width="28" height="5" rx="1" fill="#3d8ee6"/><rect x="1" y="10.5" width="26" height="1.6" fill="#d2d2d2"/><rect x="1" y="16" width="26" height="1.6" fill="#d2d2d2"/><rect x="8.5" y="5" width="1.6" height="18" fill="#d2d2d2"/><rect x="19" y="5" width="1.6" height="18" fill="#d2d2d2"/></svg>
<div class="t" style="left:362.6px;top:851.5px;font-size:26px;line-height:26px;color:#000;letter-spacing:0.43px;">pets</div>
<svg class="s" style="left:324px;top:886px;" width="28" height="24" viewBox="0 0 28 24"><rect x="0.5" y="0.5" width="27" height="22.5" rx="1.5" fill="#fbfbfb" stroke="#cfcfcf" stroke-width="1"/><rect x="0" y="0" width="28" height="5" rx="1" fill="#3d8ee6"/><rect x="1" y="10.5" width="26" height="1.6" fill="#d2d2d2"/><rect x="1" y="16" width="26" height="1.6" fill="#d2d2d2"/><rect x="8.5" y="5" width="1.6" height="18" fill="#d2d2d2"/><rect x="19" y="5" width="1.6" height="18" fill="#d2d2d2"/></svg>
<div class="t" style="left:362.6px;top:889.4px;font-size:26px;line-height:26px;color:#000;letter-spacing:0.38px;">pets_traits</div>
<svg class="s" style="left:324px;top:924px;" width="28" height="24" viewBox="0 0 28 24"><rect x="0.5" y="0.5" width="27" height="22.5" rx="1.5" fill="#fbfbfb" stroke="#cfcfcf" stroke-width="1"/><rect x="0" y="0" width="28" height="5" rx="1" fill="#3d8ee6"/><rect x="1" y="10.5" width="26" height="1.6" fill="#d2d2d2"/><rect x="1" y="16" width="26" height="1.6" fill="#d2d2d2"/><rect x="8.5" y="5" width="1.6" height="18" fill="#d2d2d2"/><rect x="19" y="5" width="1.6" height="18" fill="#d2d2d2"/></svg>
<div class="t" style="left:362.6px;top:927.3px;font-size:26px;line-height:26px;color:#000;letter-spacing:0.42px;">sales</div>
<svg class="s" style="left:324px;top:962px;" width="28" height="24" viewBox="0 0 28 24"><rect x="0.5" y="0.5" width="27" height="22.5" rx="1.5" fill="#fbfbfb" stroke="#cfcfcf" stroke-width="1"/><rect x="0" y="0" width="28" height="5" rx="1" fill="#3d8ee6"/><rect x="1" y="10.5" width="26" height="1.6" fill="#d2d2d2"/><rect x="1" y="16" width="26" height="1.6" fill="#d2d2d2"/><rect x="8.5" y="5" width="1.6" height="18" fill="#d2d2d2"/><rect x="19" y="5" width="1.6" height="18" fill="#d2d2d2"/></svg>
<div class="t" style="left:362.6px;top:965.2px;font-size:26px;line-height:26px;color:#000;letter-spacing:0.43px;">students</div>
<svg class="s" style="left:324px;top:1000px;" width="28" height="24" viewBox="0 0 28 24"><rect x="0.5" y="0.5" width="27" height="22.5" rx="1.5" fill="#fbfbfb" stroke="#cfcfcf" stroke-width="1"/><rect x="0" y="0" width="28" height="5" rx="1" fill="#3d8ee6"/><rect x="1" y="10.5" width="26" height="1.6" fill="#d2d2d2"/><rect x="1" y="16" width="26" height="1.6" fill="#d2d2d2"/><rect x="8.5" y="5" width="1.6" height="18" fill="#d2d2d2"/><rect x="19" y="5" width="1.6" height="18" fill="#d2d2d2"/></svg>
<div class="t" style="left:362.6px;top:1003.0px;font-size:26px;line-height:26px;color:#000;letter-spacing:0.45px;">students_grades</div>
<svg class="s" style="left:324px;top:1038px;" width="28" height="24" viewBox="0 0 28 24"><rect x="0.5" y="0.5" width="27" height="22.5" rx="1.5" fill="#fbfbfb" stroke="#cfcfcf" stroke-width="1"/><rect x="0" y="0" width="28" height="5" rx="1" fill="#3d8ee6"/><rect x="1" y="10.5" width="26" height="1.6" fill="#d2d2d2"/><rect x="1" y="16" width="26" height="1.6" fill="#d2d2d2"/><rect x="8.5" y="5" width="1.6" height="18" fill="#d2d2d2"/><rect x="19" y="5" width="1.6" height="18" fill="#d2d2d2"/></svg>
<div class="t" style="left:362.6px;top:1040.9px;font-size:26px;line-height:26px;color:#000;letter-spacing:0.45px;">supplySales</div>
<div class="r" style="left:937px;top:461.5px;width:6px;height:957.0px;background:#e3e3e3;"></div>
<div class="r" style="left:937px;top:461.5px;width:2px;height:957.0px;background:#cfcfcf;"></div>
<div class="r" style="left:941px;top:488px;width:2px;height:930.5px;background:#d3d3d3;"></div>
<div class="r" style="left:939px;top:461.5px;width:1314.5px;height:27px;background:#e9e9e9;"></div>
<div class="t" style="left:941.8px;top:463.4px;font-size:22px;line-height:22px;color:#1e1e1e;letter-spacing:-0.06px;">SQL STATEMENT</div>
<div class="r" style="left:939px;top:488px;width:1314.5px;height:2px;background:#cccccc;"></div>
<div class="r" style="left:943px;top:490px;width:1310.5px;height:272px;background:#ffffff;"></div>
<div class="t" style="left:954.3px;top:492.2px;font-family:'Liberation Mono',monospace;font-size:28px;line-height:28px;letter-spacing:-1.3px;color:#000;"><span style="color:#0000e6">SELECT</span>   <span style="color:#0000e6">FROM</span> supplySales;</div>
<svg class="s" style="left:1060px;top:495px;" width="22" height="22" viewBox="0 0 22 22"><path d="M10.4 3.2 L10.4 17.4 M3.6 6.7 L17.3 14.1 M3.6 14.1 L17.3 6.7" stroke="#000" stroke-width="2.6" stroke-linecap="round"/></svg>
<div class="r" style="left:943px;top:762px;width:1310.5px;height:5px;background:#d1d1d1;"></div>
<div class="r" style="left:943px;top:767px;width:1310.5px;height:44px;background:#ffffff;"></div>
<div class="r" style="left:985px;top:771px;width:1.5px;height:34px;background:#e6e6e6;"></div>
<div class="r" style="left:1151px;top:771px;width:1.5px;height:34px;background:#e6e6e6;"></div>
<div class="r" style="left:1318px;top:771px;width:1.5px;height:34px;background:#e6e6e6;"></div>
<div class="r" style="left:1493px;top:771px;width:1.5px;height:34px;background:#e6e6e6;"></div>
<div class="r" style="left:1686px;top:771px;width:1.5px;height:34px;background:#e6e6e6;"></div>
<div class="r" style="left:1926px;top:771px;width:1.5px;height:34px;background:#e6e6e6;"></div>
<div class="r" style="left:2092px;top:771px;width:1.5px;height:34px;background:#e6e6e6;"></div>
<div class="t" style="left:991.0px;top:777.4px;font-size:22px;line-height:22px;color:#454545;letter-spacing:0.69px;">_id</div>
<div class="t" style="left:1157.0px;top:777.4px;font-size:22px;line-height:22px;color:#454545;letter-spacing:0.77px;">customer.age</div>
<div class="t" style="left:1324.0px;top:777.4px;font-size:22px;line-height:22px;color:#454545;letter-spacing:0.74px;">customer.email</div>
<div class="t" style="left:1499.0px;top:777.4px;font-size:22px;line-height:22px;color:#454545;letter-spacing:0.76px;">customer.gender</div>
<div class="t" style="left:1692.0px;top:777.4px;font-size:22px;line-height:22px;color:#454545;letter-spacing:0.68px;">customer.satisfaction</div>
<div class="t" style="left:1932.0px;top:777.4px;font-size:22px;line-height:22px;color:#454545;letter-spacing:0.73px;">item</div>
<div class="t" style="left:2098.0px;top:777.4px;font-size:22px;line-height:22px;color:#454545;letter-spacing:0.67px;">price</div>
<div class="r" style="left:943px;top:811.5px;width:1310.5px;height:44px;background:#dcdcdc;"></div>
<div class="r" style="left:943px;top:853.5px;width:1310.5px;height:2px;background:#d6d6d6;"></div>
<div class="r" style="left:944.5px;top:811.5px;width:38.5px;height:42px;overflow:hidden;"><div class="t" style="left:5.5px;top:5.9px;font-size:22.5px;line-height:22.5px;color:#000;letter-spacing:0.19px;">1</div></div>
<div class="r" style="left:986.5px;top:811.5px;width:162.5px;height:42px;overflow:hidden;"><div class="t" style="left:6.5px;top:5.9px;font-size:22.5px;line-height:22.5px;color:#000;letter-spacing:0.60px;">5ae8a988fb72</div></div>
<div class="r" style="left:1152.5px;top:811.5px;width:163.5px;height:42px;overflow:hidden;"><div class="t" style="left:6.5px;top:5.9px;font-size:22.5px;line-height:22.5px;color:#000;letter-spacing:0.19px;">39</div></div>
<div class="r" style="left:1319.5px;top:811.5px;width:171.5px;height:42px;overflow:hidden;"><div class="t" style="left:6.5px;top:5.9px;font-size:22.5px;line-height:22.5px;color:#000;letter-spacing:0.15px;">irezitmej@wijjo.</div></div>
<div class="r" style="left:1494.5px;top:811.5px;width:189.5px;height:42px;overflow:hidden;"><div class="t" style="left:6.5px;top:5.9px;font-size:22.5px;line-height:22.5px;color:#000;letter-spacing:0.94px;">M</div></div>
<div class="r" style="left:1687.5px;top:811.5px;width:236.5px;height:42px;overflow:hidden;"><div class="t" style="left:6.5px;top:5.9px;font-size:22.5px;line-height:22.5px;color:#000;letter-spacing:0.19px;">5</div></div>
<div class="r" style="left:1927.5px;top:811.5px;width:162.5px;height:42px;overflow:hidden;"><div class="t" style="left:6.5px;top:5.9px;font-size:22.5px;line-height:22.5px;color:#000;letter-spacing:0.49px;">printer paper</div></div>
<div class="r" style="left:2093.5px;top:811.5px;width:157.5px;height:42px;overflow:hidden;"><div class="t" style="left:6.5px;top:5.9px;font-size:22.5px;line-height:22.5px;color:#000;letter-spacing:0.17px;">12.39</div></div>
<div class="r" style="left:943px;top:855.5px;width:1310.5px;height:44px;background:#f4f4f4;"></div>
<div class="r" style="left:943px;top:897.5px;width:1310.5px;height:2px;background:#d6d6d6;"></div>
<div class="r" style="left:944.5px;top:855.5px;width:38.5px;height:42px;overflow:hidden;"><div class="t" style="left:5.5px;top:5.9px;font-size:22.5px;line-height:22.5px;color:#000;letter-spacing:0.19px;">2</div></div>
<div class="r" style="left:986.5px;top:855.5px;width:162.5px;height:42px;overflow:hidden;"><div class="t" style="left:6.5px;top:5.9px;font-size:22.5px;line-height:22.5px;color:#000;letter-spacing:0.60px;">5ae8a988fb72</div></div>
<div class="r" style="left:1152.5px;top:855.5px;width:163.5px;height:42px;overflow:hidden;"><div class="t" style="left:6.5px;top:5.9px;font-size:22.5px;line-height:22.5px;color:#000;letter-spacing:0.19px;">46</div></div>
<div class="r" style="left:1319.5px;top:855.5px;width:171.5px;height:42px;overflow:hidden;"><div class="t" style="left:6.5px;top:5.9px;font-size:22.5px;line-height:22.5px;color:#000;letter-spacing:0.18px;">opop@cef.pn</div></div>
<div class="r" style="left:1494.5px;top:855.5px;width:189.5px;height:42px;overflow:hidden;"><div class="t" style="left:6.5px;top:5.9px;font-size:22.5px;line-height:22.5px;color:#000;letter-spacing:0.69px;">F</div></div>
<div class="r" style="left:1687.5px;top:855.5px;width:236.5px;height:42px;overflow:hidden;"><div class="t" style="left:6.5px;top:5.9px;font-size:22.5px;line-height:22.5px;color:#000;letter-spacing:0.19px;">2</div></div>
<div class="r" style="left:1927.5px;top:855.5px;width:162.5px;height:42px;overflow:hidden;"><div class="t" style="left:6.5px;top:5.9px;font-size:22.5px;line-height:22.5px;color:#000;letter-spacing:0.59px;">backpack</div></div>
<div class="r" style="left:2093.5px;top:855.5px;width:157.5px;height:42px;overflow:hidden;"><div class="t" style="left:6.5px;top:5.9px;font-size:22.5px;line-height:22.5px;color:#000;letter-spacing:0.16px;">27.9</div></div>
<div class="r" style="left:943px;top:899.5px;width:1310.5px;height:44px;background:#ffffff;"></div>
<div class="r" style="left:943px;top:941.5px;width:1310.5px;height:2px;background:#d6d6d6;"></div>
<div class="r" style="left:944.5px;top:899.5px;width:38.5px;height:42px;overflow:hidden;"><div class="t" style="left:5.5px;top:5.9px;font-size:22.5px;line-height:22.5px;color:#000;letter-spacing:0.19px;">3</div></div>
<div class="r" style="left:986.5px;top:899.5px;width:162.5px;height:42px;overflow:hidden;"><div class="t" style="left:6.5px;top:5.9px;font-size:22.5px;line-height:22.5px;color:#000;letter-spacing:0.60px;">5ae8a988fb72</div></div>
<div class="r" style="left:1152.5px;top:899.5px;width:163.5px;height:42px;overflow:hidden;"><div class="t" style="left:6.5px;top:5.9px;font-size:22.5px;line-height:22.5px;color:#000;letter-spacing:0.19px;">44</div></div>
<div class="r" style="left:1319.5px;top:899.5px;width:171.5px;height:42px;overflow:hidden;"><div class="t" style="left:6.5px;top:5.9px;font-size:22.5px;line-height:22.5px;color:#000;letter-spacing:0.15px;">fiv@ubdil.kg</div></div>
<div class="r" style="left:1494.5px;top:899.5px;width:189.5px;height:42px;overflow:hidden;"><div class="t" style="left:6.5px;top:5.9px;font-size:22.5px;line-height:22.5px;color:#000;letter-spacing:0.69px;">F</div></div>
<div class="r" style="left:1687.5px;top:899.5px;width:236.5px;height:42px;overflow:hidden;"><div class="t" style="left:6.5px;top:5.9px;font-size:22.5px;line-height:22.5px;color:#000;letter-spacing:0.19px;">2</div></div>
<div class="r" style="left:1927.5px;top:899.5px;width:162.5px;height:42px;overflow:hidden;"><div class="t" style="left:6.5px;top:5.9px;font-size:22.5px;line-height:22.5px;color:#000;letter-spacing:0.59px;">backpack</div></div>
<div class="r" style="left:2093.5px;top:899.5px;width:157.5px;height:42px;overflow:hidden;"><div class="t" style="left:6.5px;top:5.9px;font-size:22.5px;line-height:22.5px;color:#000;letter-spacing:0.17px;">21.02</div></div>
<div class="r" style="left:943px;top:943.5px;width:1310.5px;height:44px;background:#f4f4f4;"></div>
<div class="r" style="left:943px;top:985.5px;width:1310.5px;height:2px;background:#d6d6d6;"></div>
<div class="r" style="left:944.5px;top:943.5px;width:38.5px;height:42px;overflow:hidden;"><div class="t" style="left:5.5px;top:5.9px;font-size:22.5px;line-height:22.5px;color:#000;letter-spacing:0.19px;">4</div></div>
<div class="r" style="left:986.5px;top:943.5px;width:162.5px;height:42px;overflow:hidden;"><div class="t" style="left:6.5px;top:5.9px;font-size:22.5px;line-height:22.5px;color:#000;letter-spacing:0.60px;">5ae8a988fb72</div></div>
<div class="r" style="left:1152.5px;top:943.5px;width:163.5px;height:42px;overflow:hidden;"><div class="t" style="left:6.5px;top:5.9px;font-size:22.5px;line-height:22.5px;color:#000;letter-spacing:0.19px;">39</div></div>
<div class="r" style="left:1319.5px;top:943.5px;width:171.5px;height:42px;overflow:hidden;"><div class="t" style="left:6.5px;top:5.9px;font-size:22.5px;line-height:22.5px;color:#000;letter-spacing:0.17px;">gozuso@dazi.iq</div></div>
<div class="r" style="left:1494.5px;top:943.5px;width:189.5px;height:42px;overflow:hidden;"><div class="t" style="left:6.5px;top:5.9px;font-size:22.5px;line-height:22.5px;color:#000;letter-spacing:0.69px;">F</div></div>
<div class="r" style="left:1687.5px;top:943.5px;width:236.5px;height:42px;overflow:hidden;"><div class="t" style="left:6.5px;top:5.9px;font-size:22.5px;line-height:22.5px;color:#000;letter-spacing:0.19px;">5</div></div>
<div class="r" style="left:1927.5px;top:943.5px;width:162.5px;height:42px;overflow:hidden;"><div class="t" style="left:6.5px;top:5.9px;font-size:22.5px;line-height:22.5px;color:#000;letter-spacing:0.61px;">pens</div></div>
<div class="r" style="left:2093.5px;top:943.5px;width:157.5px;height:42px;overflow:hidden;"><div class="t" style="left:6.5px;top:5.9px;font-size:22.5px;line-height:22.5px;color:#000;letter-spacing:0.17px;">10.61</div></div>
<div class="r" style="left:943px;top:987.5px;width:1310.5px;height:44px;background:#ffffff;"></div>
<div class="r" style="left:943px;top:1029.5px;width:1310.5px;height:2px;background:#d6d6d6;"></div>
<div class="r" style="left:944.5px;top:987.5px;width:38.5px;height:42px;overflow:hidden;"><div class="t" style="left:5.5px;top:5.9px;font-size:22.5px;line-height:22.5px;color:#000;letter-spacing:0.19px;">5</div></div>
<div class="r" style="left:986.5px;top:987.5px;width:162.5px;height:42px;overflow:hidden;"><div class="t" style="left:6.5px;top:5.9px;font-size:22.5px;line-height:22.5px;color:#000;letter-spacing:0.60px;">5ae8a988fb72</div></div>
<div class="r" style="left:1152.5px;top:987.5px;width:163.5px;height:42px;overflow:hidden;"><div class="t" style="left:6.5px;top:5.9px;font-size:22.5px;line-height:22.5px;color:#000;letter-spacing:0.19px;">48</div></div>
<div class="r" style="left:1319.5px;top:987.5px;width:171.5px;height:42px;overflow:hidden;"><div class="t" style="left:6.5px;top:5.9px;font-size:22.5px;line-height:22.5px;color:#000;letter-spacing:0.18px;">bi@ucweijo.pm</div></div>
<div class="r" style="left:1494.5px;top:987.5px;width:189.5px;height:42px;overflow:hidden;"><div class="t" style="left:6.5px;top:5.9px;font-size:22.5px;line-height:22.5px;color:#000;letter-spacing:0.94px;">M</div></div>
<div class="r" style="left:1687.5px;top:987.5px;width:236.5px;height:42px;overflow:hidden;"><div class="t" style="left:6.5px;top:5.9px;font-size:22.5px;line-height:22.5px;color:#000;letter-spacing:0.19px;">5</div></div>
<div class="r" style="left:1927.5px;top:987.5px;width:162.5px;height:42px;overflow:hidden;"><div class="t" style="left:6.5px;top:5.9px;font-size:22.5px;line-height:22.5px;color:#000;letter-spacing:0.52px;">binder</div></div>
<div class="r" style="left:2093.5px;top:987.5px;width:157.5px;height:42px;overflow:hidden;"><div class="t" style="left:6.5px;top:5.9px;font-size:22.5px;line-height:22.5px;color:#000;letter-spacing:0.16px;">18.8</div></div>
<div class="r" style="left:943px;top:1031.5px;width:1310.5px;height:44px;background:#f4f4f4;"></div>
<div class="r" style="left:943px;top:1073.5px;width:1310.5px;height:2px;background:#d6d6d6;"></div>
<div class="r" style="left:944.5px;top:1031.5px;width:38.5px;height:42px;overflow:hidden;"><div class="t" style="left:5.5px;top:5.9px;font-size:22.5px;line-height:22.5px;color:#000;letter-spacing:0.19px;">6</div></div>
<div class="r" style="left:986.5px;top:1031.5px;width:162.5px;height:42px;overflow:hidden;"><div class="t" style="left:6.5px;top:5.9px;font-size:22.5px;line-height:22.5px;color:#000;letter-spacing:0.60px;">5ae8a988fb72</div></div>
<div class="r" style="left:1152.5px;top:1031.5px;width:163.5px;height:42px;overflow:hidden;"><div class="t" style="left:6.5px;top:5.9px;font-size:22.5px;line-height:22.5px;color:#000;letter-spacing:0.19px;">44</div></div>
<div class="r" style="left:1319.5px;top:1031.5px;width:171.5px;height:42px;overflow:hidden;"><div class="t" style="left:6.5px;top:5.9px;font-size:22.5px;line-height:22.5px;color:#000;letter-spacing:0.20px;">ide@man.gm</div></div>
<div class="r" style="left:1494.5px;top:1031.5px;width:189.5px;height:42px;overflow:hidden;"><div class="t" style="left:6.5px;top:5.9px;font-size:22.5px;line-height:22.5px;color:#000;letter-spacing:0.94px;">M</div></div>
<div class="r" style="left:1687.5px;top:1031.5px;width:236.5px;height:42px;overflow:hidden;"><div class="t" style="left:6.5px;top:5.9px;font-size:22.5px;line-height:22.5px;color:#000;letter-spacing:0.19px;">5</div></div>
<div class="r" style="left:1927.5px;top:1031.5px;width:162.5px;height:42px;overflow:hidden;"><div class="t" style="left:6.5px;top:5.9px;font-size:22.5px;line-height:22.5px;color:#000;letter-spacing:0.49px;">printer paper</div></div>
<div class="r" style="left:2093.5px;top:1031.5px;width:157.5px;height:42px;overflow:hidden;"><div class="t" style="left:6.5px;top:5.9px;font-size:22.5px;line-height:22.5px;color:#000;letter-spacing:0.17px;">33.54</div></div>
<div class="r" style="left:943px;top:1075.5px;width:1310.5px;height:44px;background:#ffffff;"></div>
<div class="r" style="left:943px;top:1117.5px;width:1310.5px;height:2px;background:#d6d6d6;"></div>
<div class="r" style="left:944.5px;top:1075.5px;width:38.5px;height:42px;overflow:hidden;"><div class="t" style="left:5.5px;top:5.9px;font-size:22.5px;line-height:22.5px;color:#000;letter-spacing:0.19px;">7</div></div>
<div class="r" style="left:986.5px;top:1075.5px;width:162.5px;height:42px;overflow:hidden;"><div class="t" style="left:6.5px;top:5.9px;font-size:22.5px;line-height:22.5px;color:#000;letter-spacing:0.60px;">5ae8a988fb72</div></div>
<div class="r" style="left:1152.5px;top:1075.5px;width:163.5px;height:42px;overflow:hidden;"><div class="t" style="left:6.5px;top:5.9px;font-size:22.5px;line-height:22.5px;color:#000;letter-spacing:0.19px;">55</div></div>
<div class="r" style="left:1319.5px;top:1075.5px;width:171.5px;height:42px;overflow:hidden;"><div class="t" style="left:6.5px;top:5.9px;font-size:22.5px;line-height:22.5px;color:#000;letter-spacing:0.19px;">me@mibhe.tn</div></div>
<div class="r" style="left:1494.5px;top:1075.5px;width:189.5px;height:42px;overflow:hidden;"><div class="t" style="left:6.5px;top:5.9px;font-size:22.5px;line-height:22.5px;color:#000;letter-spacing:0.94px;">M</div></div>
<div class="r" style="left:1687.5px;top:1075.5px;width:236.5px;height:42px;overflow:hidden;"><div class="t" style="left:6.5px;top:5.9px;font-size:22.5px;line-height:22.5px;color:#000;letter-spacing:0.19px;">4</div></div>
<div class="r" style="left:1927.5px;top:1075.5px;width:162.5px;height:42px;overflow:hidden;"><div class="t" style="left:6.5px;top:5.9px;font-size:22.5px;line-height:22.5px;color:#000;letter-spacing:0.49px;">printer paper</div></div>
<div class="r" style="left:2093.5px;top:1075.5px;width:157.5px;height:42px;overflow:hidden;"><div class="t" style="left:6.5px;top:5.9px;font-size:22.5px;line-height:22.5px;color:#000;letter-spacing:0.17px;">36.74</div></div>
<div class="r" style="left:943px;top:1119.5px;width:1310.5px;height:44px;background:#f4f4f4;"></div>
<div class="r" style="left:943px;top:1161.5px;width:1310.5px;height:2px;background:#d6d6d6;"></div>
<div class="r" style="left:944.5px;top:1119.5px;width:38.5px;height:42px;overflow:hidden;"><div class="t" style="left:5.5px;top:5.9px;font-size:22.5px;line-height:22.5px;color:#000;letter-spacing:0.19px;">8</div></div>
<div class="r" style="left:986.5px;top:1119.5px;width:162.5px;height:42px;overflow:hidden;"><div class="t" style="left:6.5px;top:5.9px;font-size:22.5px;line-height:22.5px;color:#000;letter-spacing:0.60px;">5ae8a988fb72</div></div>
<div class="r" style="left:1152.5px;top:1119.5px;width:163.5px;height:42px;overflow:hidden;"><div class="t" style="left:6.5px;top:5.9px;font-size:22.5px;line-height:22.5px;color:#000;letter-spacing:0.19px;">58</div></div>
<div class="r" style="left:1319.5px;top:1119.5px;width:171.5px;height:42px;overflow:hidden;"><div class="t" style="left:6.5px;top:5.9px;font-size:22.5px;line-height:22.5px;color:#000;letter-spacing:0.17px;">bapico@lule.np</div></div>
<div class="r" style="left:1494.5px;top:1119.5px;width:189.5px;height:42px;overflow:hidden;"><div class="t" style="left:6.5px;top:5.9px;font-size:22.5px;line-height:22.5px;color:#000;letter-spacing:0.69px;">F</div></div>
<div class="r" style="left:1687.5px;top:1119.5px;width:236.5px;height:42px;overflow:hidden;"><div class="t" style="left:6.5px;top:5.9px;font-size:22.5px;line-height:22.5px;color:#000;letter-spacing:0.19px;">4</div></div>
<div class="r" style="left:1927.5px;top:1119.5px;width:162.5px;height:42px;overflow:hidden;"><div class="t" style="left:6.5px;top:5.9px;font-size:22.5px;line-height:22.5px;color:#000;letter-spacing:0.49px;">printer paper</div></div>
<div class="r" style="left:2093.5px;top:1119.5px;width:157.5px;height:42px;overflow:hidden;"><div class="t" style="left:6.5px;top:5.9px;font-size:22.5px;line-height:22.5px;color:#000;letter-spacing:0.16px;">7.93</div></div>
<div class="r" style="left:943px;top:1163.5px;width:1310.5px;height:44px;background:#ffffff;"></div>
<div class="r" style="left:943px;top:1205.5px;width:1310.5px;height:2px;background:#d6d6d6;"></div>
<div class="r" style="left:944.5px;top:1163.5px;width:38.5px;height:42px;overflow:hidden;"><div class="t" style="left:5.5px;top:5.9px;font-size:22.5px;line-height:22.5px;color:#000;letter-spacing:0.19px;">9</div></div>
<div class="r" style="left:986.5px;top:1163.5px;width:162.5px;height:42px;overflow:hidden;"><div class="t" style="left:6.5px;top:5.9px;font-size:22.5px;line-height:22.5px;color:#000;letter-spacing:0.60px;">5ae8a988fb72</div></div>
<div class="r" style="left:1152.5px;top:1163.5px;width:163.5px;height:42px;overflow:hidden;"><div class="t" style="left:6.5px;top:5.9px;font-size:22.5px;line-height:22.5px;color:#000;letter-spacing:0.19px;">51</div></div>
<div class="r" style="left:1319.5px;top:1163.5px;width:171.5px;height:42px;overflow:hidden;"><div class="t" style="left:6.5px;top:5.9px;font-size:22.5px;line-height:22.5px;color:#000;letter-spacing:0.17px;">juba@zup.hr</div></div>
<div class="r" style="left:1494.5px;top:1163.5px;width:189.5px;height:42px;overflow:hidden;"><div class="t" style="left:6.5px;top:5.9px;font-size:22.5px;line-height:22.5px;color:#000;letter-spacing:0.69px;">F</div></div>
<div class="r" style="left:1687.5px;top:1163.5px;width:236.5px;height:42px;overflow:hidden;"><div class="t" style="left:6.5px;top:5.9px;font-size:22.5px;line-height:22.5px;color:#000;letter-spacing:0.19px;">2</div></div>
<div class="r" style="left:1927.5px;top:1163.5px;width:162.5px;height:42px;overflow:hidden;"><div class="t" style="left:6.5px;top:5.9px;font-size:22.5px;line-height:22.5px;color:#000;letter-spacing:0.52px;">binder</div></div>
<div class="r" style="left:2093.5px;top:1163.5px;width:157.5px;height:42px;overflow:hidden;"><div class="t" style="left:6.5px;top:5.9px;font-size:22.5px;line-height:22.5px;color:#000;letter-spacing:0.17px;">13.06</div></div>
<div class="r" style="left:943px;top:1207.5px;width:1310.5px;height:44px;background:#f4f4f4;"></div>
<div class="r" style="left:943px;top:1249.5px;width:1310.5px;height:2px;background:#d6d6d6;"></div>
<div class="r" style="left:944.5px;top:1207.5px;width:38.5px;height:42px;overflow:hidden;"><div class="t" style="left:5.5px;top:5.9px;font-size:22.5px;line-height:22.5px;color:#000;letter-spacing:0.19px;">10</div></div>
<div class="r" style="left:986.5px;top:1207.5px;width:162.5px;height:42px;overflow:hidden;"><div class="t" style="left:6.5px;top:5.9px;font-size:22.5px;line-height:22.5px;color:#000;letter-spacing:0.60px;">5ae8a988fb72</div></div>
<div class="r" style="left:1152.5px;top:1207.5px;width:163.5px;height:42px;overflow:hidden;"><div class="t" style="left:6.5px;top:5.9px;font-size:22.5px;line-height:22.5px;color:#000;letter-spacing:0.19px;">23</div></div>
<div class="r" style="left:1319.5px;top:1207.5px;width:171.5px;height:42px;overflow:hidden;"><div class="t" style="left:6.5px;top:5.9px;font-size:22.5px;line-height:22.5px;color:#000;letter-spacing:0.18px;">ehuwi@ula.ec</div></div>
<div class="r" style="left:1494.5px;top:1207.5px;width:189.5px;height:42px;overflow:hidden;"><div class="t" style="left:6.5px;top:5.9px;font-size:22.5px;line-height:22.5px;color:#000;letter-spacing:0.69px;">F</div></div>
<div class="r" style="left:1687.5px;top:1207.5px;width:236.5px;height:42px;overflow:hidden;"><div class="t" style="left:6.5px;top:5.9px;font-size:22.5px;line-height:22.5px;color:#000;letter-spacing:0.19px;">3</div></div>
<div class="r" style="left:1927.5px;top:1207.5px;width:162.5px;height:42px;overflow:hidden;"><div class="t" style="left:6.5px;top:5.9px;font-size:22.5px;line-height:22.5px;color:#000;letter-spacing:0.61px;">pens</div></div>
<div class="r" style="left:2093.5px;top:1207.5px;width:157.5px;height:42px;overflow:hidden;"><div class="t" style="left:6.5px;top:5.9px;font-size:22.5px;line-height:22.5px;color:#000;letter-spacing:0.17px;">28.49</div></div>
<div class="r" style="left:943px;top:1251.5px;width:1310.5px;height:44px;background:#ffffff;"></div>
<div class="r" style="left:943px;top:1293.5px;width:1310.5px;height:2px;background:#d6d6d6;"></div>
<div class="r" style="left:944.5px;top:1251.5px;width:38.5px;height:42px;overflow:hidden;"><div class="t" style="left:5.5px;top:5.9px;font-size:22.5px;line-height:22.5px;color:#000;letter-spacing:0.18px;">11</div></div>
<div class="r" style="left:986.5px;top:1251.5px;width:162.5px;height:42px;overflow:hidden;"><div class="t" style="left:6.5px;top:5.9px;font-size:22.5px;line-height:22.5px;color:#000;letter-spacing:0.60px;">5ae8a988fb72</div></div>
<div class="r" style="left:1152.5px;top:1251.5px;width:163.5px;height:42px;overflow:hidden;"><div class="t" style="left:6.5px;top:5.9px;font-size:22.5px;line-height:22.5px;color:#000;letter-spacing:0.19px;">31</div></div>
<div class="r" style="left:1319.5px;top:1251.5px;width:171.5px;height:42px;overflow:hidden;"><div class="t" style="left:6.5px;top:5.9px;font-size:22.5px;line-height:22.5px;color:#000;letter-spacing:0.18px;">cef@logmuzes.k</div></div>
<div class="r" style="left:1494.5px;top:1251.5px;width:189.5px;height:42px;overflow:hidden;"><div class="t" style="left:6.5px;top:5.9px;font-size:22.5px;line-height:22.5px;color:#000;letter-spacing:0.69px;">F</div></div>
<div class="r" style="left:1687.5px;top:1251.5px;width:236.5px;height:42px;overflow:hidden;"><div class="t" style="left:6.5px;top:5.9px;font-size:22.5px;line-height:22.5px;color:#000;letter-spacing:0.19px;">4</div></div>
<div class="r" style="left:1927.5px;top:1251.5px;width:162.5px;height:42px;overflow:hidden;"><div class="t" style="left:6.5px;top:5.9px;font-size:22.5px;line-height:22.5px;color:#000;letter-spacing:0.58px;">notepad</div></div>
<div class="r" style="left:2093.5px;top:1251.5px;width:157.5px;height:42px;overflow:hidden;"><div class="t" style="left:6.5px;top:5.9px;font-size:22.5px;line-height:22.5px;color:#000;letter-spacing:0.17px;">14.07</div></div>
<div class="r" style="left:943px;top:1295.5px;width:1310.5px;height:44px;background:#f4f4f4;"></div>
<div class="r" style="left:943px;top:1337.5px;width:1310.5px;height:2px;background:#d6d6d6;"></div>
<div class="r" style="left:944.5px;top:1295.5px;width:38.5px;height:42px;overflow:hidden;"><div class="t" style="left:5.5px;top:5.9px;font-size:22.5px;line-height:22.5px;color:#000;letter-spacing:0.19px;">12</div></div>
<div class="r" style="left:986.5px;top:1295.5px;width:162.5px;height:42px;overflow:hidden;"><div class="t" style="left:6.5px;top:5.9px;font-size:22.5px;line-height:22.5px;color:#000;letter-spacing:0.60px;">5ae8a988fb72</div></div>
<div class="r" style="left:1152.5px;top:1295.5px;width:163.5px;height:42px;overflow:hidden;"><div class="t" style="left:6.5px;top:5.9px;font-size:22.5px;line-height:22.5px;color:#000;letter-spacing:0.19px;">32</div></div>
<div class="r" style="left:1319.5px;top:1295.5px;width:171.5px;height:42px;overflow:hidden;"><div class="t" style="left:6.5px;top:5.9px;font-size:22.5px;line-height:22.5px;color:#000;letter-spacing:0.17px;">iwumita@dabzi.</div></div>
<div class="r" style="left:1494.5px;top:1295.5px;width:189.5px;height:42px;overflow:hidden;"><div class="t" style="left:6.5px;top:5.9px;font-size:22.5px;line-height:22.5px;color:#000;letter-spacing:0.69px;">F</div></div>
<div class="r" style="left:1687.5px;top:1295.5px;width:236.5px;height:42px;overflow:hidden;"><div class="t" style="left:6.5px;top:5.9px;font-size:22.5px;line-height:22.5px;color:#000;letter-spacing:0.19px;">2</div></div>
<div class="r" style="left:1927.5px;top:1295.5px;width:162.5px;height:42px;overflow:hidden;"><div class="t" style="left:6.5px;top:5.9px;font-size:22.5px;line-height:22.5px;color:#000;letter-spacing:0.52px;">binder</div></div>
<div class="r" style="left:2093.5px;top:1295.5px;width:157.5px;height:42px;overflow:hidden;"><div class="t" style="left:6.5px;top:5.9px;font-size:22.5px;line-height:22.5px;color:#000;letter-spacing:0.17px;">24.88</div></div>
<div class="r" style="left:943px;top:1339.5px;width:1310.5px;height:44px;background:#ffffff;"></div>
<div class="r" style="left:943px;top:1381.5px;width:1310.5px;height:2px;background:#d6d6d6;"></div>
<div class="r" style="left:944.5px;top:1339.5px;width:38.5px;height:42px;overflow:hidden;"><div class="t" style="left:5.5px;top:5.9px;font-size:22.5px;line-height:22.5px;color:#000;letter-spacing:0.19px;">13</div></div>
<div class="r" style="left:986.5px;top:1339.5px;width:162.5px;height:42px;overflow:hidden;"><div class="t" style="left:6.5px;top:5.9px;font-size:22.5px;line-height:22.5px;color:#000;letter-spacing:0.60px;">5ae8a988fb72</div></div>
<div class="r" style="left:1152.5px;top:1339.5px;width:163.5px;height:42px;overflow:hidden;"><div class="t" style="left:6.5px;top:5.9px;font-size:22.5px;line-height:22.5px;color:#000;letter-spacing:0.19px;">37</div></div>
<div class="r" style="left:1319.5px;top:1339.5px;width:171.5px;height:42px;overflow:hidden;"><div class="t" style="left:6.5px;top:5.9px;font-size:22.5px;line-height:22.5px;color:#000;letter-spacing:0.15px;">oribofub@li.et</div></div>
<div class="r" style="left:1494.5px;top:1339.5px;width:189.5px;height:42px;overflow:hidden;"><div class="t" style="left:6.5px;top:5.9px;font-size:22.5px;line-height:22.5px;color:#000;letter-spacing:0.94px;">M</div></div>
<div class="r" style="left:1687.5px;top:1339.5px;width:236.5px;height:42px;overflow:hidden;"><div class="t" style="left:6.5px;top:5.9px;font-size:22.5px;line-height:22.5px;color:#000;letter-spacing:0.19px;">4</div></div>
<div class="r" style="left:1927.5px;top:1339.5px;width:162.5px;height:42px;overflow:hidden;"><div class="t" style="left:6.5px;top:5.9px;font-size:22.5px;line-height:22.5px;color:#000;letter-spacing:0.58px;">notepad</div></div>
<div class="r" style="left:2093.5px;top:1339.5px;width:157.5px;height:42px;overflow:hidden;"><div class="t" style="left:6.5px;top:5.9px;font-size:22.5px;line-height:22.5px;color:#000;letter-spacing:0.17px;">19.61</div></div>
<div class="r" style="left:943px;top:1383.5px;width:1310.5px;height:35.0px;background:#f4f4f4;"></div>
<div class="r" style="left:944.5px;top:1383.5px;width:38.5px;height:42px;overflow:hidden;"><div class="t" style="left:5.5px;top:5.9px;font-size:22.5px;line-height:22.5px;color:#000;letter-spacing:0.19px;">14</div></div>
<div class="r" style="left:986.5px;top:1383.5px;width:162.5px;height:42px;overflow:hidden;"><div class="t" style="left:6.5px;top:5.9px;font-size:22.5px;line-height:22.5px;color:#000;letter-spacing:0.60px;">5ae8a988fb72</div></div>
<div class="r" style="left:1152.5px;top:1383.5px;width:163.5px;height:42px;overflow:hidden;"><div class="t" style="left:6.5px;top:5.9px;font-size:22.5px;line-height:22.5px;color:#000;letter-spacing:0.19px;">36</div></div>
<div class="r" style="left:1319.5px;top:1383.5px;width:171.5px;height:42px;overflow:hidden;"><div class="t" style="left:6.5px;top:5.9px;font-size:22.5px;line-height:22.5px;color:#000;letter-spacing:0.15px;">kut@dij.lv</div></div>
<div class="r" style="left:1494.5px;top:1383.5px;width:189.5px;height:42px;overflow:hidden;"><div class="t" style="left:6.5px;top:5.9px;font-size:22.5px;line-height:22.5px;color:#000;letter-spacing:0.69px;">F</div></div>
<div class="r" style="left:1687.5px;top:1383.5px;width:236.5px;height:42px;overflow:hidden;"><div class="t" style="left:6.5px;top:5.9px;font-size:22.5px;line-height:22.5px;color:#000;letter-spacing:0.19px;">4</div></div>
<div class="r" style="left:1927.5px;top:1383.5px;width:162.5px;height:42px;overflow:hidden;"><div class="t" style="left:6.5px;top:5.9px;font-size:22.5px;line-height:22.5px;color:#000;letter-spacing:0.49px;">printer paper</div></div>
<div class="r" style="left:2093.5px;top:1383.5px;width:157.5px;height:42px;overflow:hidden;"><div class="t" style="left:6.5px;top:5.9px;font-size:22.5px;line-height:22.5px;color:#000;letter-spacing:0.17px;">25.15</div></div>
<div class="r" style="left:985px;top:811.5px;width:2px;height:607.0px;background:#d6d6d6;"></div>
<div class="r" style="left:1151px;top:811.5px;width:2px;height:607.0px;background:#d6d6d6;"></div>
<div class="r" style="left:1318px;top:811.5px;width:2px;height:607.0px;background:#d6d6d6;"></div>
<div class="r" style="left:1493px;top:811.5px;width:2px;height:607.0px;background:#d6d6d6;"></div>
<div class="r" style="left:1686px;top:811.5px;width:2px;height:607.0px;background:#d6d6d6;"></div>
<div class="r" style="left:1926px;top:811.5px;width:2px;height:607.0px;background:#d6d6d6;"></div>
<div class="r" style="left:2092px;top:811.5px;width:2px;height:607.0px;background:#d6d6d6;"></div>
<svg class="s" style="left:0;top:0" width="2386" height="210" viewBox="0 0 2386 210"><path d="M35.1 79.4 L59.39999999999999 79.4 L76.6 96.60000000000001 L76.6 132.7 L35.1 132.7 Z" fill="#fdfdfd" stroke="#9c9c9c" stroke-width="1.3" stroke-linejoin="round"/><path d="M59.39999999999999 79.4 L59.39999999999999 96.60000000000001 L76.6 96.60000000000001" fill="#ececec" stroke="#b4b4b4" stroke-width="1.1"/><circle cx="38.8" cy="110.9" r="15.8" fill="#eaf5fc" stroke="#8d9bb2" stroke-width="1.2"/><ellipse cx="38.8" cy="110.9" rx="5.8" ry="15.8" fill="none" stroke="#8d9bb2" stroke-width="1.1"/><path d="M23 110.9 L54.6 110.9 M26 101.9 L51.6 101.9 M26 119.8 L51.6 119.8" stroke="#8d9bb2" stroke-width="1.1"/><path d="M119 79.4 L143.3 79.4 L160.5 96.60000000000001 L160.5 132.7 L119 132.7 Z" fill="#fdfdfd" stroke="#9c9c9c" stroke-width="1.3" stroke-linejoin="round"/><path d="M143.3 79.4 L143.3 96.60000000000001 L160.5 96.60000000000001" fill="#ececec" stroke="#b4b4b4" stroke-width="1.1"/><rect x="109.8" y="97.3" width="24.6" height="29.4" rx="1" fill="#fcfcfc" stroke="#9a9a9a" stroke-width="1.3"/><rect x="114.3" y="102.0" width="15.4" height="1.9" fill="#a6a6a6"/><rect x="114.3" y="108.0" width="15.4" height="1.9" fill="#a6a6a6"/><rect x="114.3" y="114.0" width="15.4" height="1.9" fill="#a6a6a6"/><rect x="114.3" y="120.1" width="15.4" height="1.9" fill="#a6a6a6"/><path d="M231.1 79.3 L255.40000000000003 79.3 L272.6 96.5 L272.6 132.6 L231.1 132.6 Z" fill="#fdfdfd" stroke="#9c9c9c" stroke-width="1.3" stroke-linejoin="round"/><path d="M255.40000000000003 79.3 L255.40000000000003 96.5 L272.6 96.5" fill="#ececec" stroke="#b4b4b4" stroke-width="1.1"/><path d="M220 122 Q220 127.5 232 127.5 Q244 127.5 244 122 L244 119 Q244 113.5 232 113.5 Q220 113.5 220 119 Z" fill="#a9a9a9"/><path d="M220 114 Q220 119.5 232 119.5 Q244 119.5 244 114 L244 111 Q244 105.5 232 105.5 Q220 105.5 220 111 Z" fill="#a9a9a9" stroke="#f4f4f4" stroke-width="1"/><path d="M220 106 Q220 111.5 232 111.5 Q244 111.5 244 106 L244 101.5 Q244 96.4 232 96.4 Q220 96.4 220 101.5 Z" fill="#a9a9a9" stroke="#f4f4f4" stroke-width="1"/><ellipse cx="232" cy="101.5" rx="9.8" ry="3.6" fill="#fafafa"/><path d="M286.2 102.1 L295.7 102.1 L290.95 109.1 Z" fill="#8a8a8a"/><path d="M385.1 79.4 L409.40000000000003 79.4 L426.6 96.60000000000001 L426.6 132.7 L385.1 132.7 Z" fill="#fdfdfd" stroke="#9c9c9c" stroke-width="1.3" stroke-linejoin="round"/><path d="M409.40000000000003 79.4 L409.40000000000003 96.60000000000001 L426.6 96.60000000000001" fill="#ececec" stroke="#b4b4b4" stroke-width="1.1"/><path d="M378.5 108.5 Q389 95.5 399.5 103.5" stroke="#84c184" stroke-width="5.2" fill="none"/><path d="M404 98.2 L404 109.8 L392.2 109.8 Z" fill="#84c184"/><path d="M400.5 115.5 Q392 128.5 380 120.5" stroke="#84c184" stroke-width="5.2" fill="none"/><path d="M375.7 113.9 L387.5 114.2 L375.7 125.7 Z" fill="#84c184"/><path d="M446.2 102.2 L455.7 102.2 L450.95 109.2 Z" fill="#8a8a8a"/><rect x="483.6" y="71.5" width="29" height="24.5" fill="#fdfdfd" stroke="#8e8e8e" stroke-width="1.3"/><rect x="494.5" y="92.5" width="12" height="4" fill="#fdfdfd" stroke="#8e8e8e" stroke-width="1"/><circle cx="497.8" cy="81.7" r="4.3" fill="none" stroke="#6aa6ea" stroke-width="3"/><path d="M497.8 75.5 L497.8 88 M491.6 81.7 L504 81.7 M493.4 77.3 L502.2 86.1 M502.2 77.3 L493.4 86.1" stroke="#6aa6ea" stroke-width="1.6"/><circle cx="497.8" cy="81.7" r="2" fill="#fdfdfd"/><rect x="485.4" y="115.4" width="25" height="29" fill="#f7f8fa" stroke="#d2d2d2" stroke-width="1.2"/><rect x="490.5" y="122" width="5" height="5" fill="#d7dcea"/><rect x="498.5" y="124" width="8" height="1.5" fill="#dadde8"/><rect x="490.5" y="133" width="16" height="1.5" fill="#e6e6e6"/><path d="M485.4 161.3 L497.4 161.3 L507.5 170.4 L507.5 188.3 L485.4 188.3 Z" fill="#f9f9f9" stroke="#d0d0d0" stroke-width="1.1"/><path d="M497.4 161.3 L497.4 170.4 L507.5 170.4" fill="none" stroke="#d0d0d0" stroke-width="1"/><path d="M497 191 L505 182 M506 179 L514 170" stroke="#c4c4c4" stroke-width="5.5" stroke-linecap="round" fill="none"/><path d="M497 191 L505 182 M506 179 L514 170" stroke="#f4f4f4" stroke-width="2" stroke-linecap="round" fill="none"/><text x='712' y='97.6' font-family='Liberation Sans' font-size='19' fill='#6e9ee0' stroke='#6e9ee0' stroke-width='0.4'>A</text><text x='712.8' y='116' font-family='Liberation Sans' font-size='19' fill='#8a8a8a' stroke='#8a8a8a' stroke-width='0.4'>Z</text><path d="M736.3 92 L739.9 92 L739.9 102 L744 102 L738.1 110.8 L732.2 102 L736.3 102 Z" fill="#7c7c7c"/><text x='712.8' y='157.9' font-family='Liberation Sans' font-size='19' fill='#8a8a8a' stroke='#8a8a8a' stroke-width='0.4'>Z</text><text x='712' y='175.6' font-family='Liberation Sans' font-size='19' fill='#6e9ee0' stroke='#6e9ee0' stroke-width='0.4'>A</text><path d="M736.3 152.2 L739.9 152.2 L739.9 162.4 L744 162.4 L738.1 171 L732.2 162.4 L736.3 162.4 Z" fill="#7c7c7c"/><text x='778' y='116' font-family='Liberation Sans' font-size='47' fill='#70a4e2' stroke='#70a4e2' stroke-width='1'>A</text><text x='797' y='129.6' font-family='Liberation Sans' font-size='48' fill='#8e8e8e' stroke='#8e8e8e' stroke-width='1.1'>Z</text><g opacity="1.0"><path d="M887.9 88.22500000000001 L906.0 112.7 L906.0 129 Q912 133 918.0 129 L918.0 112.7 L936.1 88.22500000000001 Z" fill="#b9b9b9" stroke="#9f9f9f" stroke-width="1"/><ellipse cx="912" cy="88.22500000000001" rx="24.1" ry="6.025" fill="#ebebeb" stroke="#9f9f9f" stroke-width="1.6"/></g><g opacity="0.35"><path d="M970.1 88.52499999999999 L982.0 104 L982.0 114 Q985 118 988.0 114 L988.0 104 L999.9 88.52499999999999 Z" fill="#b9b9b9" stroke="#9f9f9f" stroke-width="1"/><ellipse cx="985" cy="88.52499999999999" rx="14.9" ry="3.725" fill="#ebebeb" stroke="#9f9f9f" stroke-width="1.6"/></g><path d="M990 103 L1003.5 116.5 M1003.5 103 L990 116.5" stroke="#f2c4c8" stroke-width="3.2"/><g opacity="1.0"><path d="M970.1 148.42499999999998 L982.0 164 L982.0 173 Q985 177 988.0 173 L988.0 164 L999.9 148.42499999999998 Z" fill="#b9b9b9" stroke="#9f9f9f" stroke-width="1"/><ellipse cx="985" cy="148.42499999999998" rx="14.9" ry="3.725" fill="#ebebeb" stroke="#9f9f9f" stroke-width="1.6"/></g><path d="M987.5 176.5 L990 169 L1002 157 Q1005 155 1007 157.5 Q1008.5 160 1006.5 162 L994.5 174 Z" fill="#6d9fdc" stroke="#f4f4f4" stroke-width="1"/><path d="M987.5 176.5 L990 169 L994.5 174 Z" fill="#9a9a9a"/><rect x="1179.3" y="97.3" width="23.1" height="31.3" fill="#fdfdfd" stroke="#929292" stroke-width="1.3"/><rect x="1182" y="103.2" width="15.8" height="1.7" fill="#b9bfcc"/><rect x="1182" y="109.3" width="15.8" height="1.7" fill="#b9bfcc"/><rect x="1182" y="115.0" width="15.8" height="1.7" fill="#b9bfcc"/><rect x="1182" y="121.10000000000001" width="15.8" height="1.7" fill="#b9bfcc"/><rect x="1209.5" y="97.3" width="23.2" height="31.3" fill="#fdfdfd" stroke="#929292" stroke-width="1.3"/><rect x="1210.2" y="98" width="21.8" height="7.5" fill="#d9d9d9"/><path d="M1209.5 105.5 L1232.7 105.5 M1209.5 113.3 L1232.7 113.3 M1209.5 121.2 L1232.7 121.2 M1220.6 97.3 L1220.6 128.6" stroke="#9a9a9a" stroke-width="1"/><path d="M1192 89 Q1199 77.5 1212 85.5" stroke="#6fa0d8" stroke-width="4.6" fill="none" stroke-linecap="round"/><path d="M1220.3 77 L1220.3 92.3 L1207 92.3 Z" fill="#6fa0d8"/><rect x="1280.8" y="102.7" width="24.2" height="24.2" fill="#e3e3e3"/><rect x="1268.7" y="78.4" width="48.4" height="48.5" fill="none" stroke="#c6c6c6" stroke-width="1.3"/><path d="M1280.8 78.4 L1280.8 126.9 M1293 78.4 L1293 126.9 M1305 78.4 L1305 126.9 M1268.7 90.7 L1317.1 90.7 M1268.7 102.7 L1317.1 102.7 M1268.7 114.4 L1317.1 114.4" stroke="#cdcdcd" stroke-width="1.1"/><rect x="1280.8" y="90.7" width="24.2" height="12" fill="none" stroke="#82b670" stroke-width="1.4"/><path d="M1313 98.5 L1328 98.5 L1319.5 111 L1325 111 L1306 133.6 L1311 115.5 L1305.5 115.5 Z" fill="#f6a75e" stroke="#f4f4f4" stroke-width="1"/><rect x="1369.3" y="83.0" width="17.4" height="11.85" fill="#c3daf6"/><rect x="1369.3" y="94.85" width="17.4" height="11.85" fill="#fcebc0"/><rect x="1369.3" y="106.7" width="17.4" height="11.85" fill="#c3d5f4"/><rect x="1369.3" y="118.55" width="17.4" height="11.85" fill="#fcebc0"/><rect x="1369.3" y="83" width="17.4" height="47.4" rx="1" fill="none" stroke="#959595" stroke-width="1.2"/><path d="M1369.3 94.85 L1386.7 94.85" stroke="#a0a0a0" stroke-width="0.9"/><path d="M1369.3 106.7 L1386.7 106.7" stroke="#a0a0a0" stroke-width="0.9"/><path d="M1369.3 118.55 L1386.7 118.55" stroke="#a0a0a0" stroke-width="0.9"/><rect x="1405.2" y="83.0" width="17.4" height="11.85" fill="#c3daf6"/><rect x="1405.2" y="94.85" width="17.4" height="11.85" fill="#fcebc0"/><rect x="1405.2" y="106.7" width="17.4" height="11.85" fill="#fbfbfb"/><rect x="1405.2" y="118.55" width="17.4" height="11.85" fill="#fbfbfb"/><rect x="1405.2" y="83" width="17.4" height="47.4" rx="1" fill="none" stroke="#959595" stroke-width="1.2"/><path d="M1405.2 94.85 L1422.6000000000001 94.85" stroke="#a0a0a0" stroke-width="0.9"/><path d="M1405.2 106.7 L1422.6000000000001 106.7" stroke="#a0a0a0" stroke-width="0.9"/><path d="M1405.2 118.55 L1422.6000000000001 118.55" stroke="#a0a0a0" stroke-width="0.9"/><path d="M1386 106.2 L1392.4 106.2 L1392.4 100.1 L1402 108.1 L1392.4 115.8 L1392.4 110.1 L1386 110.1 Z" fill="#66a3e0"/><rect x="1479.3" y="85.2" width="30" height="13.5" rx="1" fill="#fdfdfd" stroke="#929292" stroke-width="1.2"/><rect x="1479.3" y="113.3" width="30" height="13.2" rx="1" fill="#fdfdfd" stroke="#929292" stroke-width="1.2"/><circle cx="1516" cy="91.6" r="9.6" fill="#7dbd6c"/><path d="M1511 92 L1514.5 95.5 L1521 88.5" stroke="#fff" stroke-width="2.6" fill="none"/><circle cx="1516" cy="119.7" r="8.3" fill="#fff" stroke="#e07284" stroke-width="2.8"/><path d="M1510.5 125 L1521.5 114.5" stroke="#e07284" stroke-width="2.8"/><path d="M1544 102 L1553.5 102 L1548.75 109 Z" fill="#8a8a8a"/><rect x="1601.6" y="85.1" width="19.1" height="41.2" rx="1" fill="#fdfdfd" stroke="#929292" stroke-width="1.2"/><path d="M1601.6 98.4 L1620.7 98.4 M1601.6 112.2 L1620.7 112.2" stroke="#d8d8d8" stroke-width="1"/><path d="M1620.7 104.2 L1626.3 104.2 L1626.3 98.4 L1635.8 106 L1626.3 113.7 L1626.3 107.7 L1620.7 107.7 Z" fill="#6a9ed8"/><rect x="1639.5" y="99.3" width="19" height="13.3" rx="1" fill="#fffaf2" stroke="#f1b37f" stroke-width="1.2"/><rect x="1739.4" y="83.3" width="49.3" height="45" fill="#fdfdfd"/><rect x="1749.3" y="90.6" width="9.9" height="10.6" fill="#fbd8b9"/><rect x="1749.3" y="110.7" width="9.9" height="10.1" fill="#fbd8b9"/><path d="M1749.3 83.3 L1749.3 128.3 M1759.2 83.3 L1759.2 128.3 M1769 83.3 L1769 128.3 M1778.9 83.3 L1778.9 128.3 M1739.4 90.6 L1788.7 90.6 M1739.4 101.2 L1788.7 101.2 M1739.4 110.7 L1788.7 110.7 M1739.4 120.8 L1788.7 120.8" stroke="#d8d0c8" stroke-width="0.9"/><rect x="1739.4" y="83.3" width="49.3" height="45" fill="none" stroke="#9c9c9c" stroke-width="1.2"/><path d="M1771 106 Q1770 95 1780.5 94.5 Q1791 94.5 1790.5 104 Q1790 110 1784 113.5 Q1780.8 115.5 1780.8 121" stroke="#f4f4f4" stroke-width="9" fill="none"/><path d="M1771 106 Q1770 95 1780.5 94.5 Q1791 94.5 1790.5 104 Q1790 110 1784 113.5 Q1780.8 115.5 1780.8 121" stroke="#6e9fde" stroke-width="5" fill="none"/><circle cx="1780.5" cy="129" r="4" fill="#6e9fde"/><path d="M1802.2 102.2 L1811.7 102.2 L1806.95 109.2 Z" fill="#8a8a8a"/><path d="M1887.8000000000002 80.5 L1878.4 80.5 Q1874.4 80.5 1874.4 84.5 L1874.4 127 Q1874.4 131 1878.4 131 L1887.8000000000002 131" stroke="#c9c9c9" stroke-width="1.6" fill="none"/><rect x="1893.3" y="81.1" width="21.3" height="49.2" rx="1" fill="#fdfdfd" stroke="#959595" stroke-width="1.2"/><path d="M1893.3 90.2 L1914.6 90.2" stroke="#a8a8a8" stroke-width="0.9"/><path d="M1893.3 100.2 L1914.6 100.2" stroke="#a8a8a8" stroke-width="0.9"/><path d="M1893.3 110.3 L1914.6 110.3" stroke="#a8a8a8" stroke-width="0.9"/><path d="M1893.3 120.4 L1914.6 120.4" stroke="#a8a8a8" stroke-width="0.9"/><rect x="1865.3" y="95.3" width="21.5" height="21.1" rx="2.5" fill="#eaf2fc" stroke="#8cb0dc" stroke-width="1.2"/><path d="M1876 99 L1876 113 M1869 106 L1883 106" stroke="#7aa8e2" stroke-width="3.2"/><path d="M1934 102.1 L1943.5 102.1 L1938.75 109.1 Z" fill="#8a8a8a"/><path d="M1991.8000000000002 80.5 L1982.4 80.5 Q1978.4 80.5 1978.4 84.5 L1978.4 127 Q1978.4 131 1982.4 131 L1991.8000000000002 131" stroke="#c9c9c9" stroke-width="1.6" fill="none"/><rect x="1997.2" y="81.1" width="21.3" height="49.2" rx="1" fill="#fdfdfd" stroke="#959595" stroke-width="1.2"/><path d="M1997.2 90.2 L2018.5 90.2" stroke="#a8a8a8" stroke-width="0.9"/><path d="M1997.2 100.2 L2018.5 100.2" stroke="#a8a8a8" stroke-width="0.9"/><path d="M1997.2 110.3 L2018.5 110.3" stroke="#a8a8a8" stroke-width="0.9"/><path d="M1997.2 120.4 L2018.5 120.4" stroke="#a8a8a8" stroke-width="0.9"/><rect x="1969.2" y="95.3" width="21.3" height="21.1" rx="2.5" fill="#fdfdfd" stroke="#e27d8b" stroke-width="1.2"/><path d="M1973 113.5 L1987 98.5" stroke="#e07a8c" stroke-width="2.6"/><path d="M2038 102.1 L2047.5 102.1 L2042.75 109.1 Z" fill="#8a8a8a"/><path d="M2085 97.5 L2085 84 Q2085 80 2089 80 L2094 80" stroke="#c9c9c9" stroke-width="1.6" fill="none"/><rect x="2097.5" y="81.1" width="35.2" height="49.2" rx="1" fill="#fdfdfd" stroke="#959595" stroke-width="1.2"/><path d="M2097.5 90.2 L2132.7 90.2" stroke="#e2e2e2" stroke-width="0.9"/><path d="M2097.5 100.2 L2132.7 100.2" stroke="#e2e2e2" stroke-width="0.9"/><path d="M2097.5 110.3 L2132.7 110.3" stroke="#e2e2e2" stroke-width="0.9"/><path d="M2097.5 120.4 L2132.7 120.4" stroke="#e2e2e2" stroke-width="0.9"/><path d="M2113.9 81.1 L2113.9 130.3" stroke="#e0e0e0" stroke-width="0.9"/><rect x="2102" y="84.9" width="8" height="1.8" fill="#7a7a7a"/><rect x="2102" y="94.9" width="8" height="1.8" fill="#7a7a7a"/><rect x="2102" y="115.0" width="8" height="1.8" fill="#7a7a7a"/><rect x="2102" y="104.0" width="8" height="2.8" fill="#f3ac6c"/><rect x="2118" y="104.0" width="9" height="2.8" fill="#efc9a8"/><rect x="2102" y="124.10000000000001" width="8" height="2.8" fill="#f3ac6c"/><rect x="2118" y="124.10000000000001" width="9" height="2.8" fill="#efc9a8"/><rect x="2077.4" y="97.5" width="15.2" height="14.6" rx="2" fill="#fdfdfd" stroke="#9a9a9a" stroke-width="1.2"/><path d="M2085 100.7 L2085 108.9 M2080.9 104.8 L2089.1 104.8" stroke="#777" stroke-width="1.6"/><rect x="2077.4" y="117.6" width="15.2" height="14.6" rx="2" fill="#fdfdfd" stroke="#9a9a9a" stroke-width="1.2"/><path d="M2085 120.8 L2085 129.0 M2080.9 124.89999999999999 L2089.1 124.89999999999999" stroke="#777" stroke-width="1.6"/><path d="M2186.4 84.8 L2207.9 84.8 M2186.4 115.0 L2207.9 115.0" stroke="#d6d6d6" stroke-width="1.5"/><path d="M2194 90.39999999999999 L2208 90.39999999999999" stroke="#e6e6e6" stroke-width="1.3"/><path d="M2194 96.49999999999999 L2208 96.49999999999999" stroke="#e6e6e6" stroke-width="1.3"/><path d="M2194 102.6 L2208 102.6" stroke="#e6e6e6" stroke-width="1.3"/><path d="M2194 108.69999999999999 L2208 108.69999999999999" stroke="#e6e6e6" stroke-width="1.3"/><rect x="2173.6" y="91.2" width="15" height="14.7" rx="2.5" fill="#eef5fb" stroke="#d9e2ea" stroke-width="1.2"/><path d="M2181.1 94.3 L2181.1 102.8 M2176.9 98.5 L2185.3 98.5" stroke="#c7cfd7" stroke-width="1.4"/><path d="M2186.4 144.7 L2207.9 144.7 M2186.4 174.89999999999998 L2207.9 174.89999999999998" stroke="#d6d6d6" stroke-width="1.5"/><path d="M2194 150.29999999999998 L2208 150.29999999999998" stroke="#e6e6e6" stroke-width="1.3"/><path d="M2194 156.39999999999998 L2208 156.39999999999998" stroke="#e6e6e6" stroke-width="1.3"/><path d="M2194 162.49999999999997 L2208 162.49999999999997" stroke="#e6e6e6" stroke-width="1.3"/><path d="M2194 168.59999999999997 L2208 168.59999999999997" stroke="#e6e6e6" stroke-width="1.3"/><rect x="2173.6" y="151.1" width="15" height="14.7" rx="2.5" fill="#fbf0f1" stroke="#ecd6d9" stroke-width="1.2"/><path d="M2176.9 158.39999999999998 L2185.3 158.39999999999998" stroke="#f0c8cc" stroke-width="2.2"/></svg>
</body></html>
